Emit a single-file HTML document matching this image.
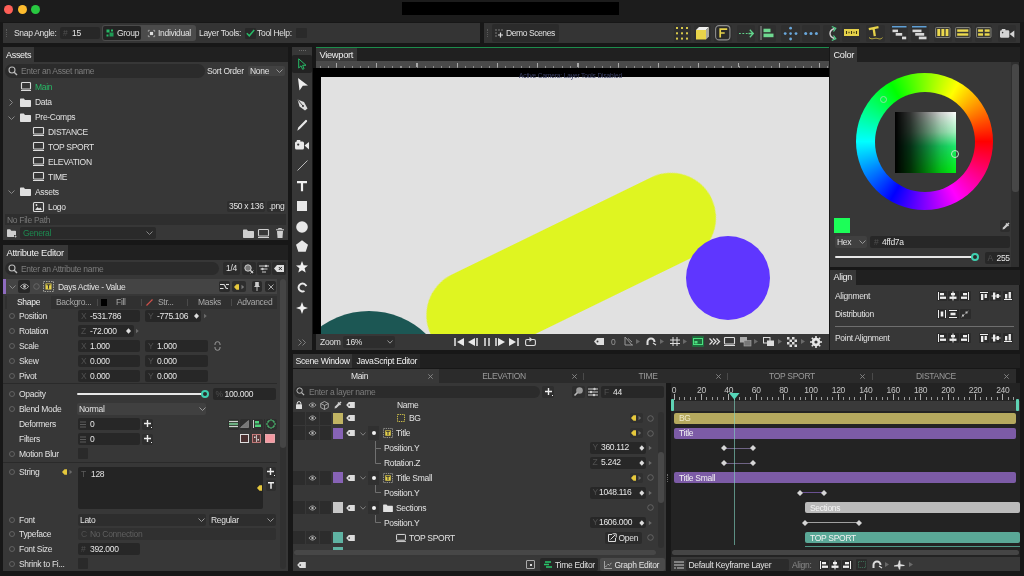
<!DOCTYPE html>
<html><head><meta charset="utf-8"><title>Scene</title>
<style>
*{box-sizing:border-box;margin:0;padding:0}
html,body{width:1024px;height:576px;overflow:hidden;background:#171717}
body{position:relative;font-family:"Liberation Sans",sans-serif;font-size:8.5px;color:#e2e2e2;letter-spacing:-0.3px}
.a{position:absolute}
.p{position:absolute;background:#373737}
.tb{position:absolute;background:#202020}
.tab{position:absolute;background:#373737;color:#f0f0f0;padding:0 0 0 3.5px;font-size:8.7px;line-height:14px;height:14px;white-space:nowrap}
.in{position:absolute;background:#272727;border-radius:2px;height:12px;line-height:12px;padding-left:12px;color:#e6e6e6;white-space:nowrap}
.in i{position:absolute;left:3px;top:0;font-style:normal;color:#505050}
.t{position:absolute;white-space:nowrap;line-height:12px;height:12px}
.d{color:#8c8c8c}
.g{color:#27b866}
svg{position:absolute;overflow:visible}
</style></head><body>
<div id="w" style="position:absolute;left:0;top:0;width:1024px;height:576px;will-change:transform;transform:translateZ(0)">
<!-- title bar -->
<div class="a" style="left:0;top:0;width:1024px;height:22px;background:#1c1c1c"></div>
<div class="a" style="left:4px;top:5px;width:9px;height:9px;border-radius:5px;background:#fe5f57"></div>
<div class="a" style="left:18px;top:5px;width:9px;height:9px;border-radius:5px;background:#febc2e"></div>
<div class="a" style="left:31px;top:5px;width:9px;height:9px;border-radius:5px;background:#28c840"></div>
<div class="a" style="left:402px;top:2px;width:217px;height:13px;background:#000"></div>

<div class="p" style="left:3px;top:23px;width:477px;height:20px;background:#343434"></div>
<div class="p" style="left:484px;top:23px;width:535.5px;height:20px;background:#343434"></div>
<div class="a" style="left:6px;top:29px;width:1px;height:8px;border-left:1px dotted #5a5a5a"></div>
<div class="a" style="left:487px;top:29px;width:1px;height:8px;border-left:1px dotted #5a5a5a"></div>
<div class="t" style="left:14px;top:27px">Snap Angle:</div>
<div class="in" style="left:60px;top:27px;width:40px;height:12px;line-height:12px"><i>#</i>15</div>
<div class="a" style="left:102px;top:25px;width:94px;height:16px;background:#4b4b4b;border-radius:3px"></div>
<div class="a" style="left:103px;top:26px;width:38px;height:14px;background:#232323;border-radius:2px"></div>
<svg style="left:106px;top:29px" width="8" height="8" viewBox="0 0 8 8"><rect x="0.5" y="0.5" width="3" height="3" fill="#27b866"/><rect x="3.5" y="3.5" width="4" height="4" fill="#1f9a55"/><rect x="5" y="0.5" width="2" height="2" fill="#27b866"/><rect x="0.5" y="5.5" width="2" height="2" fill="#27b866"/></svg>
<div class="t" style="left:117px;top:27px">Group</div>
<svg style="left:147.5px;top:29.5px" width="7" height="7" viewBox="0 0 8 8"><rect x="2.2" y="2.2" width="3.6" height="3.6" fill="#ddd"/><path d="M0.4 2V0.4H2M6 0.4H7.6V2M7.6 6V7.6H6M2 7.6H0.4V6" stroke="#bbb" fill="none" stroke-width="0.9"/></svg>
<div class="t" style="left:158px;top:27px">Individual</div>
<div class="t" style="left:199px;top:27px">Layer Tools:</div>
<div class="a" style="left:244.5px;top:27.5px;width:11px;height:11px;background:#282828;border-radius:1px"></div>
<svg style="left:245.5px;top:29px" width="9" height="8" viewBox="0 0 9 8"><path d="M0.8 4.2L3.3 6.8L8.2 1" stroke="#27b866" stroke-width="1.5" fill="none"/></svg>
<div class="t" style="left:257px;top:27px">Tool Help:</div>
<div class="a" style="left:296px;top:28px;width:11px;height:10px;background:#2a2a2a;border-radius:1px"></div>
<div class="a" style="left:492px;top:24px;width:67px;height:18px;background:#2b2b2b;border-radius:2px"></div>
<svg style="left:495px;top:29px" width="9" height="9" viewBox="0 0 9 9"><path d="M0.5 1h1M3.5 1h1M0.5 4h1M6.5 1h1M0.5 7h1" stroke="#ccc" stroke-width="1"/><path d="M5.5 3.5v5M3 6h5" stroke="#ddd" stroke-width="1.2"/></svg>
<div class="t" style="left:506px;top:27px;letter-spacing:-0.42px">Demo Scenes</div>
<!-- right icons -->
<div class="a" style="left:673.5px;top:24.5px;width:17px;height:17px;background:#2f2f2f;border-radius:2px"></div>
<div class="a" style="left:693.5px;top:24.5px;width:17px;height:17px;background:#2f2f2f;border-radius:2px"></div>
<div class="a" style="left:714px;top:24.5px;width:17.5px;height:17px;background:#2f2f2f;border-radius:2px"></div>
<div class="a" style="left:737px;top:24.5px;width:18px;height:17px;background:#2f2f2f;border-radius:2px"></div>
<div class="a" style="left:758px;top:24.5px;width:18px;height:17px;background:#2f2f2f;border-radius:2px"></div>
<div class="a" style="left:781px;top:24.5px;width:18.5px;height:17px;background:#2f2f2f;border-radius:2px"></div>
<div class="a" style="left:801.5px;top:24.5px;width:18.5px;height:17px;background:#2f2f2f;border-radius:2px"></div>
<div class="a" style="left:823px;top:24.5px;width:17px;height:17px;background:#2f2f2f;border-radius:2px"></div>
<div class="a" style="left:842px;top:24.5px;width:18px;height:17px;background:#2f2f2f;border-radius:2px"></div>
<div class="a" style="left:865.5px;top:24.5px;width:19px;height:17px;background:#2f2f2f;border-radius:2px"></div>
<div class="a" style="left:889.5px;top:24.5px;width:18px;height:17px;background:#2f2f2f;border-radius:2px"></div>
<div class="a" style="left:910.5px;top:24.5px;width:18px;height:17px;background:#2f2f2f;border-radius:2px"></div>
<div class="a" style="left:933.5px;top:24.5px;width:18px;height:17px;background:#2f2f2f;border-radius:2px"></div>
<div class="a" style="left:954.5px;top:24.5px;width:17.5px;height:17px;background:#2f2f2f;border-radius:2px"></div>
<div class="a" style="left:974.5px;top:24.5px;width:17.5px;height:17px;background:#2f2f2f;border-radius:2px"></div>
<div class="a" style="left:997.5px;top:24.5px;width:18.5px;height:17px;background:#2f2f2f;border-radius:2px"></div>
<svg style="left:676px;top:26.5px" width="12" height="13" viewBox="0 0 12 13" fill="#d8c84a"><rect x="0" y="0" width="2" height="2"/><rect x="5" y="0" width="2" height="2"/><rect x="10" y="0" width="2" height="2"/><rect x="0" y="5.3" width="2" height="2"/><rect x="5" y="5.3" width="2" height="2"/><rect x="10" y="5.3" width="2" height="2"/><rect x="0" y="10.6" width="2" height="2"/><rect x="5" y="10.6" width="2" height="2"/><rect x="10" y="10.6" width="2" height="2"/></svg>
<svg style="left:695.5px;top:27px" width="13" height="12.5" viewBox="0 0 13 12.5"><path d="M0 3L3 0H13L10 3Z" fill="#f0f0ee"/><path d="M10 3L13 0V9.5L10 12.5Z" fill="#a9a9a0"/><rect x="0" y="3" width="10" height="9.5" fill="#e8d44a"/></svg>
<svg style="left:715px;top:25px" width="15.5" height="15.5" viewBox="0 0 15.5 15.5"><rect x="0.6" y="0.6" width="14.3" height="14.3" rx="3.5" fill="#2a2a2a" stroke="#8e8e8e" stroke-width="1.1"/><path d="M5.2 3.2v9.4M5.2 4.2h7M5.2 8h4.5" stroke="#e6d24a" stroke-width="1.7" fill="none"/></svg>
<svg style="left:739px;top:28.5px" width="15" height="9" viewBox="0 0 15 9"><path d="M0 4.5h1.8M3.4 4.5h1.8M6.8 4.5h1.8" stroke="#62d48c" stroke-width="1.2"/><path d="M9.5 4.5H14M10.8 0.8L14.3 4.5L10.8 8.2" stroke="#62d48c" stroke-width="1.3" fill="none"/></svg>
<svg style="left:759.5px;top:26px" width="14" height="14" viewBox="0 0 14 14"><path d="M1 0v14" stroke="#9a9a9a" stroke-width="1"/><rect x="3.5" y="2.7" width="7" height="3.5" fill="#6fd890"/><rect x="3.5" y="7.6" width="10" height="3.6" fill="#6fd890"/></svg>
<svg style="left:783px;top:25.5px" width="15" height="15" viewBox="0 0 15 15" fill="#6aa8dc"><circle cx="7.6" cy="7.6" r="1.3"/><circle cx="7.6" cy="2.2" r="1.4"/><circle cx="7.6" cy="13" r="1.4"/><circle cx="2.2" cy="7.6" r="1.4"/><circle cx="13" cy="7.6" r="1.4"/></svg>
<svg style="left:804px;top:31.5px" width="14" height="3" viewBox="0 0 14 3" fill="#6aa8dc"><circle cx="1.7" cy="1.5" r="1.5"/><circle cx="7" cy="1.5" r="1.5"/><circle cx="12.4" cy="1.5" r="1.5"/></svg>
<svg style="left:826.5px;top:25.5px" width="10" height="15" viewBox="0 0 10 15"><path d="M7.5 2.5C1.5 4.5 1.5 10.5 7.5 12.5" stroke="#d0d0d0" stroke-width="1.4" fill="none"/><path d="M4.8 0.5L8.8 2.2L6.5 5.5M6.5 9.5L8.8 12.8L4.8 14.5" stroke="#4fd088" stroke-width="1.2" fill="none"/></svg>
<svg style="left:843.5px;top:29.3px" width="15" height="7" viewBox="0 0 15 7"><rect width="15" height="7" fill="#e6d24a"/><path d="M2.5 2v3M5 2.7v1.6M7.5 2v3M10 2.7v1.6M12.5 2v3" stroke="#3d3710" stroke-width="1.1"/></svg>
<svg style="left:868px;top:26px" width="15" height="14" viewBox="0 0 15 14"><path d="M0.8 3.2L10.5 1.2M5.6 2.2L6.8 10.2" stroke="#e6d24a" stroke-width="2.3" fill="none"/><path d="M1 11.5c2.5 2.5 5 0.5 7.5 0.8s3.5 1.6 6-0.6" stroke="#c9b93f" stroke-width="1" fill="none"/></svg>
<svg style="left:891.5px;top:25.5px" width="15" height="14" viewBox="0 0 15 14"><rect x="0" y="0" width="14.5" height="1.5" fill="#5f9fd6"/><rect x="0.5" y="3.6" width="5.5" height="2.6" fill="#d8d8d8"/><rect x="3.7" y="7" width="6.5" height="2.7" fill="#d8d8d8"/><rect x="10" y="10.6" width="4.2" height="2.7" fill="#d8d8d8"/></svg>
<svg style="left:912px;top:25.5px" width="15" height="14" viewBox="0 0 15 14"><rect x="0" y="0" width="14.5" height="1.5" fill="#5f9fd6"/><rect x="0.5" y="3.6" width="9" height="2.6" fill="#d8d8d8"/><rect x="3.2" y="7" width="9" height="2.7" fill="#d8d8d8"/><rect x="6.8" y="10.6" width="7.7" height="2.7" fill="#d8d8d8"/></svg>
<svg style="left:934.8px;top:27.4px" width="15.5" height="11" viewBox="0 0 15.5 11"><rect x="0.5" y="0.5" width="14.5" height="10" rx="1" fill="#3a3a34" stroke="#8a8a84" stroke-width="0.9"/><rect x="2.3" y="2" width="2.8" height="7" fill="#ecd94e"/><rect x="6.4" y="2" width="2.9" height="7" fill="#ecd94e"/><rect x="10.6" y="2" width="2.8" height="7" fill="#ecd94e"/></svg>
<svg style="left:955.2px;top:27.4px" width="15.5" height="11" viewBox="0 0 15.5 11"><rect x="0.5" y="0.5" width="14.5" height="10" rx="1" fill="#3a3a34" stroke="#8a8a84" stroke-width="0.9"/><rect x="2.2" y="2.4" width="11.1" height="2.4" fill="#ecd94e"/><rect x="2.2" y="6.3" width="11.1" height="2.4" fill="#ecd94e"/></svg>
<svg style="left:975.5px;top:27.4px" width="15.5" height="11" viewBox="0 0 15.5 11"><rect x="0.5" y="0.5" width="14.5" height="10" rx="1" fill="#3a3a34" stroke="#8a8a84" stroke-width="0.9"/><rect x="2.1" y="2.4" width="4.9" height="2.4" fill="#ecd94e"/><rect x="8.7" y="2.4" width="4.9" height="2.4" fill="#ecd94e"/><rect x="2.1" y="6.3" width="4.9" height="2.4" fill="#ecd94e"/><rect x="8.7" y="6.3" width="4.9" height="2.4" fill="#ecd94e"/></svg>
<svg style="left:999.7px;top:28.5px" width="14.5" height="9" viewBox="0 0 14.5 9"><rect x="0" y="1.3" width="9.3" height="7.5" rx="1.3" fill="#d4d4d4"/><path d="M9.6 5L14.3 1.5v7.2Z" fill="#d4d4d4"/><rect x="1.8" y="0" width="3.6" height="2" fill="#d4d4d4"/><circle cx="2.6" cy="3.6" r="0.8" fill="#363636"/></svg>

<!-- ASSETS PANEL -->
<div class="tb" style="left:3px;top:47px;width:285px;height:15px"></div>
<div class="tab" style="left:3px;top:47px;width:31px;height:15px;line-height:16.5px;padding-left:3px;font-size:9px">Assets</div>
<div class="p" style="left:3px;top:62px;width:285px;height:178px"></div>
<div class="a" style="left:5px;top:64px;width:200px;height:13.5px;background:#2b2b2b;border-radius:7px"></div>
<svg style="left:8px;top:66px" width="10" height="10" viewBox="0 0 10 10"><circle cx="4" cy="4" r="3" stroke="#bbb" stroke-width="1.1" fill="none"/><path d="M6.2 6.2L9 9" stroke="#bbb" stroke-width="1.4"/></svg>
<div class="t d" style="left:21px;top:65px;color:#7d7d7d">Enter an Asset name</div>
<div class="t" style="left:207px;top:65px">Sort Order</div>
<div class="a" style="left:248px;top:66px;width:36.5px;height:10px;background:#424242;border-radius:2px"></div>
<div class="t" style="left:250px;top:65px">None</div>
<svg style="left:276px;top:69px" width="7" height="4" viewBox="0 0 7 4"><path d="M0.5 0.5L3.5 3.5L6.5 0.5" stroke="#999" fill="none"/></svg>
<!-- tree -->
<svg style="left:21px;top:82px" width="10" height="9" viewBox="0 0 10 9"><rect x="0.5" y="0.5" width="9" height="6.5" rx="0.8" fill="none" stroke="#ddd" stroke-width="1.1"/><path d="M0 8.5h10" stroke="#ddd" stroke-width="1"/></svg>
<div class="t g" style="left:35px;top:81px">Main</div>
<svg style="left:9px;top:99px" width="4" height="7" viewBox="0 0 4 7"><path d="M0.5 0.5L3.5 3.5L0.5 6.5" stroke="#888" fill="none"/></svg>
<svg style="left:20px;top:98px" width="11" height="9" viewBox="0 0 11 9"><path d="M0 1.2Q0 0.5 0.7 0.5H3.8L5 2H10.3Q11 2 11 2.7V8.3Q11 9 10.3 9H0.7Q0 9 0 8.3Z" fill="#e0e0e0"/></svg>
<div class="t" style="left:35px;top:96px">Data</div>
<svg style="left:8px;top:116px" width="7" height="4" viewBox="0 0 7 4"><path d="M0.5 0.5L3.5 3.5L6.5 0.5" stroke="#888" fill="none"/></svg>
<svg style="left:20px;top:113px" width="11" height="9" viewBox="0 0 11 9"><path d="M0 1.2Q0 0.5 0.7 0.5H3.8L5 2H10.3Q11 2 11 2.7V8.3Q11 9 10.3 9H0.7Q0 9 0 8.3Z" fill="#e0e0e0"/></svg>
<div class="t" style="left:35px;top:111px">Pre-Comps</div>
<svg style="left:33px;top:127px" width="11" height="9" viewBox="0 0 11 9"><rect x="0.5" y="0.5" width="10" height="6.5" rx="0.8" fill="none" stroke="#ddd" stroke-width="1.1"/><path d="M0 8.5h11" stroke="#ddd" stroke-width="1"/></svg>
<div class="t" style="left:48px;top:126px">DISTANCE</div>
<svg style="left:33px;top:142px" width="11" height="9" viewBox="0 0 11 9"><rect x="0.5" y="0.5" width="10" height="6.5" rx="0.8" fill="none" stroke="#ddd" stroke-width="1.1"/><path d="M0 8.5h11" stroke="#ddd" stroke-width="1"/></svg>
<div class="t" style="left:48px;top:141px">TOP SPORT</div>
<svg style="left:33px;top:157px" width="11" height="9" viewBox="0 0 11 9"><rect x="0.5" y="0.5" width="10" height="6.5" rx="0.8" fill="none" stroke="#ddd" stroke-width="1.1"/><path d="M0 8.5h11" stroke="#ddd" stroke-width="1"/></svg>
<div class="t" style="left:48px;top:156px">ELEVATION</div>
<svg style="left:33px;top:172px" width="11" height="9" viewBox="0 0 11 9"><rect x="0.5" y="0.5" width="10" height="6.5" rx="0.8" fill="none" stroke="#ddd" stroke-width="1.1"/><path d="M0 8.5h11" stroke="#ddd" stroke-width="1"/></svg>
<div class="t" style="left:48px;top:171px">TIME</div>
<svg style="left:8px;top:190px" width="7" height="4" viewBox="0 0 7 4"><path d="M0.5 0.5L3.5 3.5L6.5 0.5" stroke="#888" fill="none"/></svg>
<svg style="left:20px;top:187px" width="11" height="9" viewBox="0 0 11 9"><path d="M0 1.2Q0 0.5 0.7 0.5H3.8L5 2H10.3Q11 2 11 2.7V8.3Q11 9 10.3 9H0.7Q0 9 0 8.3Z" fill="#e0e0e0"/></svg>
<div class="t" style="left:35px;top:186px">Assets</div>
<svg style="left:33px;top:202px" width="11" height="10" viewBox="0 0 11 10"><rect x="0.5" y="0.5" width="10" height="9" rx="1" fill="none" stroke="#ddd" stroke-width="1.1"/><path d="M2 8L4.5 5L6 6.5L7.5 5.5L9 8Z" fill="#ddd"/><circle cx="3.5" cy="3" r="0.9" fill="#ddd"/></svg>
<div class="t" style="left:48px;top:201px">Logo</div>
<div class="a" style="left:227px;top:201px;width:38px;height:11px;background:#2e2e2e;border-radius:2px"></div>
<div class="t" style="left:229px;top:200px">350 x 136</div>
<div class="a" style="left:267px;top:201px;width:18px;height:11px;background:#2e2e2e;border-radius:2px"></div>
<div class="t" style="left:269px;top:200px">.png</div>
<div class="a" style="left:5px;top:214px;width:281px;height:11px;background:#2e2e2e"></div>
<div class="t" style="left:7px;top:214px;color:#7a7a7a">No File Path</div>
<svg style="left:7px;top:229px" width="10" height="9" viewBox="0 0 10 9"><path d="M0 1Q0 0.3 0.7 0.3H3.2L4.3 1.7H8.3Q9 1.7 9 2.4V7.3Q9 8 8.3 8H0.7Q0 8 0 7.3Z" fill="#cfcfcf"/><rect x="7" y="6" width="3" height="3" fill="#383838"/><path d="M8.5 6.5v2M7.5 7.5h2" stroke="#cfcfcf" stroke-width="0.8"/></svg>
<div class="a" style="left:20px;top:227px;width:136px;height:12px;background:#2a2a2a;border-radius:2px"></div>
<div class="t" style="left:23px;top:227px;color:#1d8a50">General</div>
<svg style="left:146px;top:231px" width="7" height="4" viewBox="0 0 7 4"><path d="M0.5 0.5L3.5 3.5L6.5 0.5" stroke="#888" fill="none"/></svg>
<svg style="left:243px;top:229px" width="11" height="9" viewBox="0 0 11 9"><path d="M0 1.2Q0 0.5 0.7 0.5H3.8L5 2H10.3Q11 2 11 2.7V8.3Q11 9 10.3 9H0.7Q0 9 0 8.3Z" fill="#cfcfcf"/></svg>
<svg style="left:258px;top:229px" width="11" height="9" viewBox="0 0 11 9"><rect x="0.5" y="0.5" width="10" height="6.5" rx="0.8" fill="none" stroke="#cfcfcf" stroke-width="1.1"/><path d="M0 8.5h11" stroke="#cfcfcf" stroke-width="1"/></svg>
<svg style="left:276px;top:228px" width="8" height="10" viewBox="0 0 8 10"><path d="M0 1.8h8M2.5 1.5V0.5h3v1" stroke="#cfcfcf" fill="none" stroke-width="1"/><path d="M1 3h6l-0.5 7h-5Z" fill="#cfcfcf"/></svg>
<!-- ATTRIBUTE EDITOR -->
<div class="tb" style="left:3px;top:245px;width:285px;height:15px"></div>
<div class="tab" style="left:3px;top:245px;width:65px;height:15px;line-height:16px;font-size:9.4px">Attribute Editor</div>
<div class="p" style="left:3px;top:260px;width:285px;height:311px"></div>
<div class="a" style="left:5px;top:262px;width:214px;height:13px;background:#2b2b2b;border-radius:7px"></div>
<svg style="left:8px;top:264px" width="10" height="10" viewBox="0 0 10 10"><circle cx="4" cy="4" r="3" stroke="#bbb" stroke-width="1.1" fill="none"/><path d="M6.2 6.2L9 9" stroke="#bbb" stroke-width="1.4"/></svg>
<div class="t" style="left:21px;top:263px;color:#7d7d7d">Enter an Attribute name</div>
<div class="a" style="left:223px;top:262px;width:17px;height:13px;background:#2b2b2b;border-radius:2px"></div>
<div class="t" style="left:226px;top:262px">1/4</div>
<div class="a" style="left:242px;top:262px;width:14px;height:13px;background:#2b2b2b;border-radius:2px"></div>
<svg style="left:244px;top:264px" width="10" height="10" viewBox="0 0 10 10"><circle cx="4" cy="4" r="3.2" stroke="#ccc" stroke-width="1" fill="#777"/><path d="M6 6L9 9" stroke="#ccc" stroke-width="1.4"/><path d="M6.5 9.5L9.5 6.5" stroke="#ccc" stroke-width="0.8"/></svg>
<div class="a" style="left:257px;top:262px;width:14px;height:13px;background:#2b2b2b;border-radius:2px"></div>
<svg style="left:259px;top:265px" width="10" height="8" viewBox="0 0 10 8"><path d="M0 1h10M1.5 4h7M3 7h4" stroke="#ccc" stroke-width="1.2"/><circle cx="7" cy="1" r="1.2" fill="#ccc"/><circle cx="3.5" cy="4" r="1.2" fill="#ccc"/></svg>
<div class="a" style="left:272px;top:262px;width:14px;height:13px;background:#2b2b2b;border-radius:2px"></div>
<svg style="left:274px;top:265px" width="10" height="7" viewBox="0 0 10 7"><path d="M0 3.5L3 0H10V7H3Z" fill="#ddd"/><path d="M4.8 2l3 3M7.8 2l-3 3" stroke="#2b2b2b" stroke-width="1"/></svg>
<!-- layer header -->
<div class="a" style="left:3px;top:279px;width:274px;height:15px;background:#444"></div>
<div class="a" style="left:3px;top:279px;width:3px;height:15px;background:#8e6bbf"></div>
<svg style="left:9px;top:285px" width="7" height="4" viewBox="0 0 7 4"><path d="M0.5 0.5L3.5 3.5L6.5 0.5" stroke="#888" fill="none"/></svg>
<div class="a" style="left:18px;top:280px;width:12px;height:13px;background:#282828;border-radius:2px"></div>
<svg style="left:20px;top:283px" width="9" height="7" viewBox="0 0 9 7"><path d="M0.3 3.5Q4.5 -1.5 8.7 3.5Q4.5 8.5 0.3 3.5Z" fill="none" stroke="#bbb" stroke-width="0.9"/><circle cx="4.5" cy="3.5" r="1.4" fill="#bbb"/></svg>
<svg style="left:33px;top:283px" width="7" height="7" viewBox="0 0 7 7"><circle cx="3.5" cy="3.5" r="2.8" fill="none" stroke="#666" stroke-width="1"/></svg>
<svg style="left:43px;top:281px" width="11" height="11" viewBox="0 0 11 11"><rect x="0.5" y="0.5" width="10" height="10" fill="none" stroke="#b8b8b0" stroke-width="0.8" stroke-dasharray="1.5 1"/><rect x="2.5" y="2.5" width="6" height="6" fill="#e6d24a"/><path d="M3.5 3.7h4M5.5 3.7v4" stroke="#333" stroke-width="1.1"/></svg>
<div class="t" style="left:58px;top:281px">Days Active - Value</div>
<div class="a" style="left:218.5px;top:281px;width:11.5px;height:11px;background:#2a2a2a;border-radius:2px"></div>
<svg style="left:219.5px;top:283px" width="10" height="7" viewBox="0 0 10 7"><path d="M0 1.5h3.5M0 5.5h3.5M3.5 1.5C6 1.5 4.5 5.5 7 5.5H8" stroke="#ddd" stroke-width="1.1" fill="none"/><path d="M6 1.5h3" stroke="#ddd" stroke-width="1.1"/></svg>
<div class="a" style="left:232px;top:281px;width:14px;height:11px;background:#2d2d2d;border-radius:2px"></div>
<svg style="left:234px;top:284px" width="11" height="6" viewBox="0 0 11 6"><path d="M0 3L2.5 0.3H5V5.7H2.5Z" fill="#e6c83c"/><path d="M7.5 0.8L10.2 3L7.5 5.2Z" fill="#7a7a7a"/></svg>
<div class="a" style="left:251.5px;top:281px;width:10.5px;height:11px;background:#2a2a2a;border-radius:2px"></div>
<svg style="left:254px;top:282px" width="6" height="9" viewBox="0 0 6 9"><path d="M1.2 0h3.6v3.5L6 5H0L1.2 3.5Z" fill="#ccc"/><path d="M3 5v4" stroke="#ccc" stroke-width="0.9"/></svg>
<div class="a" style="left:265px;top:281px;width:11px;height:11px;background:#2a2a2a;border-radius:2px"></div>
<svg style="left:267.5px;top:283.5px" width="6" height="6" viewBox="0 0 6 6"><path d="M0.5 0.5L5.5 5.5M5.5 0.5L0.5 5.5" stroke="#aaa" stroke-width="1"/></svg>
<!-- sub tabs -->
<div class="a" style="left:5px;top:296px;width:272px;height:13px;background:#303030"></div>
<div class="a" style="left:6.5px;top:296px;width:44px;height:13px;background:#373737"></div>
<div class="t" style="left:17px;top:296px;color:#f2f2f2">Shape</div>
<div class="t" style="left:56px;top:296px;color:#a8a8a8">Backgro...</div>
<div class="a" style="left:101px;top:299px;width:6px;height:7px;background:#000"></div>
<div class="t" style="left:116px;top:296px;color:#a8a8a8">Fill</div>
<svg style="left:146px;top:299px" width="7" height="7" viewBox="0 0 7 7"><path d="M0.5 6.5L6.5 0.5" stroke="#d0504a" stroke-width="1.2"/></svg>
<div class="t" style="left:158px;top:296px;color:#a8a8a8">Str...</div>
<div class="t" style="left:198px;top:296px;color:#a8a8a8">Masks</div>
<div class="t" style="left:237px;top:296px;color:#a8a8a8">Advanced</div>
<div class="a" style="left:97px;top:299px;width:1px;height:7px;background:#4a4a4a"></div>
<div class="a" style="left:141px;top:299px;width:1px;height:7px;background:#4a4a4a"></div>
<div class="a" style="left:187px;top:299px;width:1px;height:7px;background:#4a4a4a"></div>
<div class="a" style="left:231px;top:299px;width:1px;height:7px;background:#4a4a4a"></div>
<svg style="left:9px;top:313px" width="6" height="6" viewBox="0 0 6 6"><circle cx="3" cy="3" r="2.5" fill="none" stroke="#666" stroke-width="0.9"/></svg>
<div class="t" style="left:19px;top:310px">Position</div>
<div class="in" style="left:78px;top:310px;width:62px"><i>X</i>-531.786</div>
<div class="in" style="left:145px;top:310px;width:56px"><i>Y</i>-775.106</div>
<svg style="left:193.5px;top:313px" width="14" height="6" viewBox="0 0 14 6"><path d="M2.5 0.2L5 3L2.5 5.8L0 3Z" fill="#ddd"/><path d="M10 0.8L12.8 3L10 5.2Z" fill="#6a6a6a"/></svg>
<svg style="left:9px;top:328px" width="6" height="6" viewBox="0 0 6 6"><circle cx="3" cy="3" r="2.5" fill="none" stroke="#666" stroke-width="0.9"/></svg>
<div class="t" style="left:19px;top:325px">Rotation</div>
<div class="in" style="left:78px;top:325px;width:55.5px"><i>Z</i>-72.000</div>
<svg style="left:125.5px;top:328px" width="14" height="6" viewBox="0 0 14 6"><path d="M2.5 0.2L5 3L2.5 5.8L0 3Z" fill="#ddd"/><path d="M10 0.8L12.8 3L10 5.2Z" fill="#6a6a6a"/></svg>
<svg style="left:9px;top:343px" width="6" height="6" viewBox="0 0 6 6"><circle cx="3" cy="3" r="2.5" fill="none" stroke="#666" stroke-width="0.9"/></svg>
<div class="t" style="left:19px;top:340px">Scale</div>
<div class="in" style="left:78px;top:340px;width:62px"><i>X</i>1.000</div>
<div class="in" style="left:145px;top:340px;width:63px"><i>Y</i>1.000</div>
<svg style="left:214px;top:341px" width="7" height="10" viewBox="0 0 7 10"><path d="M1 4V3Q1 0.7 3.5 0.7Q6 0.7 6 3V4M1 6V7Q1 9.3 3.5 9.3Q6 9.3 6 7V6" stroke="#999" fill="none" stroke-width="1"/></svg>
<svg style="left:9px;top:358px" width="6" height="6" viewBox="0 0 6 6"><circle cx="3" cy="3" r="2.5" fill="none" stroke="#666" stroke-width="0.9"/></svg>
<div class="t" style="left:19px;top:355px">Skew</div>
<div class="in" style="left:78px;top:355px;width:62px"><i>X</i>0.000</div>
<div class="in" style="left:145px;top:355px;width:63px"><i>Y</i>0.000</div>
<svg style="left:9px;top:373px" width="6" height="6" viewBox="0 0 6 6"><circle cx="3" cy="3" r="2.5" fill="none" stroke="#666" stroke-width="0.9"/></svg>
<div class="t" style="left:19px;top:370px">Pivot</div>
<div class="in" style="left:78px;top:370px;width:62px"><i>X</i>0.000</div>
<div class="in" style="left:145px;top:370px;width:63px"><i>Y</i>0.000</div>
<div class="a" style="left:3px;top:383px;width:274px;height:1px;background:#2a2a2a"></div>
<svg style="left:9px;top:391px" width="6" height="6" viewBox="0 0 6 6"><circle cx="3" cy="3" r="2.5" fill="none" stroke="#666" stroke-width="0.9"/></svg>
<div class="t" style="left:19px;top:388px">Opacity</div>
<div class="a" style="left:77px;top:393px;width:128px;height:2px;background:#e8e8e8;border-radius:1px"></div>
<div class="a" style="left:201px;top:390px;width:8px;height:8px;border-radius:4px;background:#2b2b2b;border:2px solid #3fd0b0"></div>
<div class="in" style="left:212.5px;top:388px;width:63px"><i>%</i>100.000</div>
<svg style="left:9px;top:406px" width="6" height="6" viewBox="0 0 6 6"><circle cx="3" cy="3" r="2.5" fill="none" stroke="#666" stroke-width="0.9"/></svg>
<div class="t" style="left:19px;top:403px">Blend Mode</div>
<div class="a" style="left:77px;top:403px;width:129px;height:12px;background:#404040;border-radius:2px"></div>
<div class="t" style="left:79px;top:403px">Normal</div>
<svg style="left:199px;top:407px" width="7" height="4" viewBox="0 0 7 4"><path d="M0.5 0.5L3.5 3.5L6.5 0.5" stroke="#999" fill="none"/></svg>
<div class="t" style="left:19px;top:418px">Deformers</div>
<div class="in" style="left:78px;top:418px;width:62px"><i></i>0</div>
<svg style="left:80px;top:421px" width="6" height="7" viewBox="0 0 6 7"><path d="M0 1h6M0 3.5h6M0 6h6" stroke="#5c5c5c" stroke-width="1"/></svg>
<div class="a" style="left:142px;top:418.5px;width:11.3px;height:11px;background:#2e2e2e;border-radius:2px"></div>
<svg style="left:144px;top:420px" width="8" height="8" viewBox="0 0 8 8"><path d="M3.5 0v7M0 3.5h7" stroke="#eee" stroke-width="1.4"/><rect x="7" y="7" width="1" height="1" fill="#eee"/></svg>
<div class="a" style="left:228px;top:418.5px;width:11px;height:11px;background:#2e2e2e;border-radius:2px"></div>
<div class="a" style="left:239.5px;top:418.5px;width:11px;height:11px;background:#2e2e2e;border-radius:2px"></div>
<div class="a" style="left:251.5px;top:418.5px;width:11px;height:11px;background:#2e2e2e;border-radius:2px"></div>
<div class="a" style="left:265.5px;top:418.5px;width:11px;height:11px;background:#2e2e2e;border-radius:2px"></div>
<div class="a" style="left:264px;top:419px;width:1px;height:25px;background:#2c2c2c"></div>
<svg style="left:229px;top:420px" width="9" height="8" viewBox="0 0 9 8"><rect width="9" height="8" fill="#3c4a3c"/><path d="M0 1.5h9M0 4h9M0 6.5h9" stroke="#cfcfcf" stroke-width="1.2"/><path d="M0 4h9" stroke="#4fd07a" stroke-width="1"/></svg>
<svg style="left:240px;top:420px" width="9" height="8" viewBox="0 0 9 8"><path d="M0.5 7.5L8.5 0.5V7.5Z" fill="#777" stroke="#999" stroke-width="0.6"/></svg>
<svg style="left:252px;top:419px" width="10" height="10" viewBox="0 0 10 10"><rect width="10" height="10" fill="#2f2f2f"/><path d="M1.5 1v8" stroke="#ccc" stroke-width="1"/><rect x="3" y="2" width="4" height="2.5" fill="#4fd07a"/><rect x="3" y="5.5" width="6" height="2.5" fill="#4fd07a"/></svg>
<svg style="left:266px;top:419px" width="10" height="10" viewBox="0 0 10 10"><path d="M5 0.5L6.5 2H8V3.5L9.5 5L8 6.5V8H6.5L5 9.5L3.5 8H2V6.5L0.5 5L2 3.5V2H3.5Z" fill="none" stroke="#4fd07a" stroke-width="1"/></svg>
<div class="t" style="left:19px;top:433px">Filters</div>
<div class="in" style="left:78px;top:433px;width:62px"><i></i>0</div>
<svg style="left:80px;top:436px" width="6" height="7" viewBox="0 0 6 7"><path d="M0 1h6M0 3.5h6M0 6h6" stroke="#5c5c5c" stroke-width="1"/></svg>
<div class="a" style="left:142px;top:433.5px;width:11.3px;height:11px;background:#2e2e2e;border-radius:2px"></div>
<svg style="left:144px;top:435px" width="8" height="8" viewBox="0 0 8 8"><path d="M3.5 0v7M0 3.5h7" stroke="#eee" stroke-width="1.4"/><rect x="7" y="7" width="1" height="1" fill="#eee"/></svg>
<svg style="left:240px;top:434px" width="9" height="9" viewBox="0 0 9 9"><rect x="0.5" y="0.5" width="8" height="8" fill="#4a3030" stroke="#ddd" stroke-width="1"/></svg>
<svg style="left:252px;top:434px" width="9" height="9" viewBox="0 0 9 9"><rect x="0.5" y="0.5" width="8" height="8" fill="#5a3a3a" stroke="#d88" stroke-width="0.8"/><path d="M4.5 1v7" stroke="#ddd" stroke-width="0.8"/><rect x="2" y="2.5" width="1.5" height="1.5" fill="#ddd"/><rect x="5.5" y="5" width="1.5" height="1.5" fill="#ddd"/></svg>
<svg style="left:265px;top:434px" width="10" height="9" viewBox="0 0 10 9"><rect x="0.5" y="0.5" width="9" height="8" fill="#f49aa2" stroke="#f9b8bc" stroke-width="0.8"/></svg>
<svg style="left:9px;top:451px" width="6" height="6" viewBox="0 0 6 6"><circle cx="3" cy="3" r="2.5" fill="none" stroke="#666" stroke-width="0.9"/></svg>
<div class="t" style="left:19px;top:448px">Motion Blur</div>
<div class="a" style="left:78px;top:448px;width:10px;height:11px;background:#2a2a2a;border-radius:1px"></div>
<div class="a" style="left:3px;top:462px;width:274px;height:1px;background:#2a2a2a"></div>
<svg style="left:9px;top:469px" width="6" height="6" viewBox="0 0 6 6"><circle cx="3" cy="3" r="2.5" fill="none" stroke="#666" stroke-width="0.9"/></svg>
<div class="t" style="left:19px;top:466px">String</div>
<svg style="left:62px;top:469px" width="11" height="6" viewBox="0 0 11 6"><path d="M0 3L2.5 0.3H5V5.7H2.5Z" fill="#e6c83c"/><path d="M7.5 0.8L10.2 3L7.5 5.2Z" fill="#6a6a6a"/></svg>
<div class="a" style="left:78px;top:467px;width:185px;height:42px;background:#242424;border-radius:2px"></div>
<div class="t" style="left:81px;top:468px;color:#5c5c5c">T</div>
<div class="t" style="left:91px;top:468px">128</div>
<div class="a" style="left:266px;top:467px;width:10px;height:11px;background:#2e2e2e;border-radius:2px"></div>
<svg style="left:267px;top:468px" width="8" height="8" viewBox="0 0 8 8"><path d="M3.5 0v7M0 3.5h7" stroke="#eee" stroke-width="1.4"/><rect x="7" y="7" width="1" height="1" fill="#eee"/></svg>
<div class="a" style="left:266px;top:480px;width:10px;height:11px;background:#2e2e2e;border-radius:2px"></div>
<svg style="left:268px;top:482px" width="6" height="7" viewBox="0 0 6 7"><path d="M0 0.8h6M3 0.8v6" stroke="#eee" stroke-width="1.5"/></svg>
<svg style="left:257px;top:485px" width="5" height="6" viewBox="0 0 5 6"><path d="M0 3L2.5 0.3H5V5.7H2.5Z" fill="#e6c83c"/></svg>
<svg style="left:9px;top:517px" width="6" height="6" viewBox="0 0 6 6"><circle cx="3" cy="3" r="2.5" fill="none" stroke="#666" stroke-width="0.9"/></svg>
<div class="t" style="left:19px;top:514px">Font</div>
<div class="a" style="left:78px;top:514px;width:128px;height:12px;background:#2d2d2d;border-radius:2px"></div>
<div class="t" style="left:80px;top:514px">Lato</div>
<svg style="left:198px;top:518px" width="7" height="4" viewBox="0 0 7 4"><path d="M0.5 0.5L3.5 3.5L6.5 0.5" stroke="#999" fill="none"/></svg>
<div class="a" style="left:208.5px;top:514px;width:67px;height:12px;background:#2d2d2d;border-radius:2px"></div>
<div class="t" style="left:211px;top:514px">Regular</div>
<svg style="left:267px;top:518px" width="7" height="4" viewBox="0 0 7 4"><path d="M0.5 0.5L3.5 3.5L6.5 0.5" stroke="#999" fill="none"/></svg>
<svg style="left:9px;top:531px" width="6" height="6" viewBox="0 0 6 6"><circle cx="3" cy="3" r="2.5" fill="none" stroke="#666" stroke-width="0.9"/></svg>
<div class="t" style="left:19px;top:528px">Typeface</div>
<div class="in" style="left:78px;top:528px;width:197.5px;background:#303030"><i>C</i><span style="color:#5f5f5f">No Connection</span></div>
<svg style="left:9px;top:546px" width="6" height="6" viewBox="0 0 6 6"><circle cx="3" cy="3" r="2.5" fill="none" stroke="#666" stroke-width="0.9"/></svg>
<div class="t" style="left:19px;top:543px">Font Size</div>
<div class="in" style="left:78px;top:543px;width:62px"><i>#</i>392.000</div>
<svg style="left:9px;top:561px" width="6" height="6" viewBox="0 0 6 6"><circle cx="3" cy="3" r="2.5" fill="none" stroke="#666" stroke-width="0.9"/></svg>
<div class="t" style="left:19px;top:558px">Shrink to Fi...</div>
<div class="a" style="left:78px;top:558px;width:10px;height:11px;background:#2a2a2a;border-radius:1px"></div>
<div class="a" style="left:280px;top:279px;width:5.5px;height:290px;background:#313131;border-radius:3px"></div>
<div class="a" style="left:280px;top:279px;width:5.5px;height:169px;background:#454545;border-radius:3px"></div>

<!-- TOOLS COLUMN -->
<div class="p" style="left:292px;top:47px;width:20px;height:303px"></div>
<div class="a" style="left:299px;top:50px;width:7px;height:1px;border-top:1px dotted #6a6a6a"></div>
<div class="a" style="left:292px;top:55px;width:20px;height:18px;background:#222;border-radius:2px"></div>
<svg style="left:298px;top:58px" width="9" height="12" viewBox="0 0 9 12"><path d="M0.7 0.8V10L3 7.8L4.6 11.3L6.1 10.6L4.6 7.3H8Z" fill="none" stroke="#27b866" stroke-width="1"/></svg>
<svg style="left:298px;top:78px" width="10" height="13" viewBox="0 0 10 13"><path d="M0 0L10 7.5L4.8 7.8L1.5 12.5Z" fill="#eee"/></svg>
<svg style="left:297px;top:99px" width="11" height="12" viewBox="0 0 11 12"><path d="M0.5 0.5L7 3L10.5 9.5L8 11.5L2.5 7.5Z" fill="#ddd"/><path d="M0.5 0.5L6 7" stroke="#383838" stroke-width="0.9"/><circle cx="6" cy="7" r="1" fill="#383838"/></svg>
<svg style="left:297px;top:119px" width="11" height="12" viewBox="0 0 11 12"><path d="M0.3 11.7L1.2 8.5L8.3 1.2Q9 0.5 9.8 1.3Q10.6 2.1 9.9 2.8L2.8 10.1Z" fill="#e8e8e8"/></svg>
<svg style="left:295px;top:140px" width="14" height="10" viewBox="0 0 14 10"><rect x="0" y="1.5" width="9" height="8" rx="1.5" fill="#e8e8e8"/><path d="M9.5 5.5L14 2v7.5Z" fill="#e8e8e8"/><rect x="1.8" y="0" width="3.5" height="2.5" fill="#e8e8e8"/><circle cx="3.2" cy="4.6" r="1.1" fill="#383838"/></svg>
<svg style="left:297px;top:160px" width="11" height="11" viewBox="0 0 11 11"><path d="M0.5 10.5L10.5 0.5" stroke="#bbb" stroke-width="1"/></svg>
<svg style="left:297px;top:181px" width="10" height="10" viewBox="0 0 10 10"><path d="M0 1.2h10M5 1.2v9" stroke="#f0f0f0" stroke-width="2.2"/></svg>
<svg style="left:297px;top:201px" width="10" height="10" viewBox="0 0 10 10"><rect width="10" height="10" fill="#e8e8e8"/></svg>
<svg style="left:296px;top:221px" width="12" height="12" viewBox="0 0 12 12"><circle cx="6" cy="6" r="5.8" fill="#e8e8e8"/></svg>
<svg style="left:296px;top:240px" width="12" height="12" viewBox="0 0 12 12"><path d="M6 0.3L12 4.7L9.7 11.7H2.3L0 4.7Z" fill="#e8e8e8"/></svg>
<svg style="left:296px;top:261px" width="12" height="12" viewBox="0 0 12 12"><path d="M6 0L7.6 4.2L12 4.5L8.6 7.3L9.7 11.6L6 9.2L2.3 11.6L3.4 7.3L0 4.5L4.4 4.2Z" fill="#f0f0f0"/></svg>
<svg style="left:297px;top:282px" width="11" height="11" viewBox="0 0 11 11"><path d="M9.3 4.1A4 4 0 1 0 7.5 9" stroke="#e8e8e8" stroke-width="2" fill="none"/></svg>
<svg style="left:296px;top:302px" width="12" height="12" viewBox="0 0 12 12"><path d="M6 0L7.6 4.4L12 6L7.6 7.6L6 12L4.4 7.6L0 6L4.4 4.4Z" fill="#f0f0f0"/></svg>
<svg style="left:298px;top:339px" width="8" height="7" viewBox="0 0 8 7"><path d="M0.5 0.5L3.5 3.5L0.5 6.5M4.5 0.5L7.5 3.5L4.5 6.5" stroke="#888" fill="none" stroke-width="0.9"/></svg>

<!-- VIEWPORT -->
<div class="tb" style="left:316px;top:47px;width:513px;height:15px"></div>
<div class="a" style="left:316px;top:47px;width:513px;height:1px;background:#1d8c4c"></div>
<div class="tab" style="left:316px;top:48px;width:41px;height:13px;line-height:15px;font-size:9.3px">Viewport</div>
<div class="a" style="left:316px;top:61px;width:513px;height:7px;background:#4a4a4a"></div>
<div class="a" style="left:320px;top:66px;width:509px;height:2px;background:repeating-linear-gradient(90deg,#8e8e8e 0,#8e8e8e 1px,transparent 1px,transparent 8.05px)"></div>
<div class="a" style="left:336.1px;top:63px;width:493px;height:4px;background:repeating-linear-gradient(90deg,#a8a8a8 0,#a8a8a8 1px,transparent 1px,transparent 40.25px)"></div>
<div class="a" style="left:313px;top:68px;width:516px;height:266px;background:#000"></div>
<div class="a" style="left:321px;top:77px;width:508px;height:257px;background:#e1e1e1;overflow:hidden">
  <div class="a" style="left:-34.4px;top:233.8px;width:164px;height:164px;border-radius:82px;background:#1c5754"></div>
  <div class="a" style="left:83px;top:96.4px;width:311.5px;height:90px;border-radius:45px;background:#dff521;transform-origin:266.5px 45px;transform:rotate(-26deg);filter:blur(0.6px)"></div>
  <div class="a" style="left:365px;top:159px;width:84px;height:84px;border-radius:42px;background:#5f36ff"></div>
</div>
<div class="t" style="left:519px;top:70px;font-size:6.5px;color:#3a3f66;letter-spacing:-0.1px">Active Camera: Layer Tools Disabled</div>
<div class="p" style="left:316px;top:333.5px;width:513px;height:16px"></div>
<div class="t" style="left:320px;top:336px">Zoom</div>
<div class="a" style="left:343px;top:336px;width:52px;height:12px;background:#2d2d2d;border-radius:2px"></div>
<div class="t" style="left:346px;top:336px">16%</div>
<svg style="left:387px;top:340px" width="6" height="4" viewBox="0 0 6 4"><path d="M0.5 0.5L3 3.2L5.5 0.5" stroke="#999" fill="none"/></svg>
<svg style="left:454px;top:338px" width="10" height="8" viewBox="0 0 10 8"><path d="M1 0v8" stroke="#e8e8e8" stroke-width="1.5"/><path d="M10 0v8L3 4Z" fill="#e8e8e8"/></svg>
<svg style="left:468px;top:338px" width="10" height="8" viewBox="0 0 10 8"><path d="M7 0v8L0 4Z" fill="#e8e8e8"/><path d="M9 0v8" stroke="#e8e8e8" stroke-width="1.5"/></svg>
<svg style="left:484px;top:338px" width="6" height="8" viewBox="0 0 6 8"><path d="M1 0v8M5 0v8" stroke="#e8e8e8" stroke-width="1.5"/></svg>
<svg style="left:495px;top:338px" width="10" height="8" viewBox="0 0 10 8"><path d="M1 0v8" stroke="#e8e8e8" stroke-width="1.5"/><path d="M3 0v8L10 4Z" fill="#e8e8e8"/></svg>
<svg style="left:509px;top:338px" width="10" height="8" viewBox="0 0 10 8"><path d="M0 0v8L7 4Z" fill="#e8e8e8"/><path d="M9 0v8" stroke="#e8e8e8" stroke-width="1.5"/></svg>
<svg style="left:525px;top:337px" width="11" height="9" viewBox="0 0 11 9"><rect x="0.6" y="2.5" width="9.8" height="6" rx="1.5" fill="none" stroke="#ddd" stroke-width="1.1"/><path d="M4.5 0L7.5 2.5L4.5 5Z" fill="#ddd"/></svg>
<!-- right icons of viewport bar -->
<svg style="left:594px;top:338px" width="10" height="7" viewBox="0 0 10 7"><path d="M0 3.5L3 0H10V7H3Z" fill="#ddd"/><circle cx="3.5" cy="3.5" r="1" fill="#383838"/></svg>
<div class="t" style="left:611px;top:336px;color:#999">0</div>
<svg style="left:624px;top:337px" width="9" height="9" viewBox="0 0 9 9"><path d="M1 0v8h8M1 0L8 8M4 1.5L8 5" stroke="#999" stroke-width="1" fill="none"/></svg>
<svg style="left:636px;top:339px" width="4" height="5" viewBox="0 0 4 5"><path d="M0 0L4 2.5L0 5Z" fill="#6a6a6a"/></svg>
<svg style="left:646px;top:337px" width="10" height="9" viewBox="0 0 10 9"><path d="M1.5 8V5A3.5 3.5 0 0 1 8.5 5" stroke="#ddd" stroke-width="2" fill="none"/><path d="M7 6l3 2" stroke="#ddd" stroke-width="1.2"/></svg>
<svg style="left:660px;top:339px" width="4" height="5" viewBox="0 0 4 5"><path d="M0 0L4 2.5L0 5Z" fill="#6a6a6a"/></svg>
<svg style="left:670px;top:337px" width="10" height="9" viewBox="0 0 10 9"><path d="M3 0v9M7 0v9M0 3h10M0 6.5h10" stroke="#ddd" stroke-width="1"/></svg>
<svg style="left:683px;top:339px" width="4" height="5" viewBox="0 0 4 5"><path d="M0 0L4 2.5L0 5Z" fill="#6a6a6a"/></svg>
<div class="a" style="left:692px;top:336px;width:12px;height:11px;background:#1f6a3c;border-radius:1px"></div>
<svg style="left:693px;top:338px" width="10" height="7" viewBox="0 0 10 7"><rect x="0.5" y="0.5" width="9" height="6" fill="none" stroke="#4be07f" stroke-width="1"/><rect x="1.5" y="3" width="3" height="2.5" fill="#4be07f"/></svg>
<svg style="left:709px;top:338px" width="11" height="7" viewBox="0 0 11 7"><path d="M0.5 0.5L3.5 3.5L0.5 6.5M4 0.5L7 3.5L4 6.5M7.5 0.5L10.5 3.5L7.5 6.5" stroke="#ddd" stroke-width="1.3" fill="none"/></svg>
<svg style="left:724px;top:337px" width="11" height="9" viewBox="0 0 11 9"><rect x="0.5" y="0.5" width="10" height="6.5" rx="0.8" fill="none" stroke="#ddd" stroke-width="1.1"/><path d="M0 8.5h11" stroke="#ddd" stroke-width="1"/></svg>
<svg style="left:740px;top:337px" width="11" height="9" viewBox="0 0 11 9"><rect x="0" y="0" width="7" height="5.5" fill="#aaa"/><rect x="4" y="3.5" width="7" height="5.5" fill="#777" stroke="#aaa" stroke-width="0.6"/></svg>
<svg style="left:754px;top:339px" width="4" height="5" viewBox="0 0 4 5"><path d="M0 0L4 2.5L0 5Z" fill="#6a6a6a"/></svg>
<svg style="left:763px;top:337px" width="11" height="9" viewBox="0 0 11 9"><rect x="0.5" y="0.5" width="6.5" height="5.5" fill="none" stroke="#ddd" stroke-width="1"/><rect x="4" y="3.5" width="7" height="5.5" fill="#ddd"/></svg>
<svg style="left:778px;top:339px" width="4" height="5" viewBox="0 0 4 5"><path d="M0 0L4 2.5L0 5Z" fill="#6a6a6a"/></svg>
<svg style="left:787px;top:337px" width="10" height="10" viewBox="0 0 10 10" fill="#ddd"><rect x="0" y="0" width="2.5" height="2.5"/><rect x="5" y="0" width="2.5" height="2.5"/><rect x="2.5" y="2.5" width="2.5" height="2.5"/><rect x="7.5" y="2.5" width="2.5" height="2.5"/><rect x="0" y="5" width="2.5" height="2.5"/><rect x="5" y="5" width="2.5" height="2.5"/><rect x="2.5" y="7.5" width="2.5" height="2.5"/><rect x="7.5" y="7.5" width="2.5" height="2.5"/></svg>
<svg style="left:801px;top:339px" width="4" height="5" viewBox="0 0 4 5"><path d="M0 0L4 2.5L0 5Z" fill="#6a6a6a"/></svg>
<svg style="left:810px;top:336px" width="12" height="12" viewBox="0 0 12 12"><circle cx="6" cy="6" r="3.2" fill="none" stroke="#e8e8e8" stroke-width="2"/><path d="M6 0v12M0 6h12M1.8 1.8l8.4 8.4M10.2 1.8l-8.4 8.4" stroke="#e8e8e8" stroke-width="1.6"/><circle cx="6" cy="6" r="1.6" fill="#383838"/></svg>

<!-- COLOR PANEL -->
<div class="tb" style="left:830px;top:47px;width:189.5px;height:15px"></div>
<div class="tab" style="left:830px;top:47px;width:27px;height:15px;line-height:17px;font-size:9.2px">Color</div>
<div class="p" style="left:830px;top:62px;width:189px;height:205px"></div>
<div class="a" style="left:1011px;top:62px;width:8px;height:205px;background:#2f2f2f"></div><div class="a" style="left:1011.5px;top:64px;width:7px;height:128px;background:#474747;border-radius:3px"></div>
<div class="a" style="left:856px;top:73.3px;width:137px;height:137px;border-radius:50%;background:conic-gradient(from 90deg,#ff0000,#ff00ff,#0000ff,#00ffff,#00ff00,#ffff00,#ff0000)"></div>
<div class="a" style="left:874.5px;top:91.8px;width:100px;height:100px;border-radius:50%;background:#383838"></div>
<div class="a" style="left:894.5px;top:111.5px;width:61.5px;height:61.5px;background:linear-gradient(to right,#000 0%,rgba(0,0,0,0.8) 25%,rgba(0,0,0,0.5) 50%,rgba(0,0,0,0.2) 75%,rgba(0,0,0,0) 100%),linear-gradient(to bottom,#fff 0%,#a4f5c0 33%,#1cec6c 56%,#00f010 100%)"></div>
<div class="a" style="left:879.5px;top:95.5px;width:7px;height:7px;border-radius:50%;border:1px solid #8fe0a0"></div>
<div class="a" style="left:951px;top:149.5px;width:8px;height:8px;border-radius:50%;border:1px solid #bfe8c8"></div>
<div class="a" style="left:834px;top:217.5px;width:15.5px;height:15.5px;background:#1cfe58"></div>
<div class="a" style="left:1000px;top:219.5px;width:10px;height:12.5px;background:#2d2d2d;border-radius:2px"></div>
<svg style="left:1001.5px;top:221.5px" width="8" height="8" viewBox="0 0 8 8"><path d="M0.5 7.5L1 5.5L4.5 2L6 3.5L2.5 7Z" fill="#ccc"/><path d="M4 1.5L6.5 4M5.3 2.7L7 1" stroke="#ccc" stroke-width="1.6"/></svg>
<div class="a" style="left:834.5px;top:236px;width:32.5px;height:12px;background:#404040;border-radius:2px"></div>
<div class="t" style="left:837px;top:236px">Hex</div>
<svg style="left:859px;top:240px" width="7" height="4" viewBox="0 0 7 4"><path d="M0.5 0.5L3.5 3.5L6.5 0.5" stroke="#999" fill="none"/></svg>
<div class="in" style="left:870px;top:236px;width:140px"><i style="left:4px">#</i>4ffd7a</div>
<div class="a" style="left:834.5px;top:256.3px;width:140px;height:2px;background:#e8e8e8;border-radius:1px"></div>
<div class="a" style="left:970.5px;top:253.3px;width:8px;height:8px;border-radius:4px;background:#2b2b2b;border:2px solid #3fd0b0"></div>
<div class="in" style="left:984.5px;top:251.5px;width:25.5px"><i>A</i>255</div>
<!-- ALIGN PANEL -->
<div class="tb" style="left:830px;top:270px;width:189.5px;height:15px"></div>
<div class="tab" style="left:830px;top:270px;width:25.5px;height:15px;line-height:15px;font-size:9px">Align</div>
<div class="p" style="left:830px;top:285px;width:189px;height:65px"></div>
<div class="t" style="left:835px;top:290px">Alignment</div>
<div class="t" style="left:835px;top:308px">Distribution</div>
<div class="a" style="left:835px;top:325.5px;width:179px;height:1px;background:#6e6e6e"></div>
<div class="t" style="left:835px;top:331.5px">Point Alignment</div>
<div class="a" style="left:936.5px;top:291.3px;width:10.5px;height:10px;background:#2b2b2b;border-radius:1px"></div>
<svg style="left:936.75px;top:291.3px" width="10" height="10" viewBox="0 0 10 10"><path d="M1.5 1v8" stroke="#eee" stroke-width="1"/><rect x="3" y="2" width="4" height="2.3" fill="#eee"/><rect x="3" y="5.6" width="6" height="2.3" fill="#eee"/></svg>
<div class="a" style="left:948.2px;top:291.3px;width:10.5px;height:10px;background:#2b2b2b;border-radius:1px"></div>
<svg style="left:948.45px;top:291.3px" width="10" height="10" viewBox="0 0 10 10"><path d="M5 0.5v9" stroke="#eee" stroke-width="1"/><rect x="3" y="2" width="4" height="2.3" fill="#eee"/><rect x="1.5" y="5.6" width="7" height="2.3" fill="#eee"/></svg>
<div class="a" style="left:960px;top:291.3px;width:10.5px;height:10px;background:#2b2b2b;border-radius:1px"></div>
<svg style="left:960.25px;top:291.3px" width="10" height="10" viewBox="0 0 10 10"><path d="M8.5 1v8" stroke="#eee" stroke-width="1"/><rect x="3" y="2" width="4" height="2.3" fill="#eee"/><rect x="1" y="5.6" width="6" height="2.3" fill="#eee"/></svg>
<div class="a" style="left:978.5px;top:291.3px;width:10.5px;height:10px;background:#2b2b2b;border-radius:1px"></div>
<svg style="left:978.75px;top:291.3px" width="10" height="10" viewBox="0 0 10 10"><path d="M1 1.5h8" stroke="#eee" stroke-width="1"/><rect x="2" y="3" width="2.3" height="6" fill="#eee"/><rect x="5.6" y="3" width="2.3" height="4" fill="#eee"/></svg>
<div class="a" style="left:990.3px;top:291.3px;width:10.5px;height:10px;background:#2b2b2b;border-radius:1px"></div>
<svg style="left:990.55px;top:291.3px" width="10" height="10" viewBox="0 0 10 10"><path d="M0.5 5h9" stroke="#eee" stroke-width="1"/><rect x="2" y="1.5" width="2.3" height="7" fill="#eee"/><rect x="5.6" y="3" width="2.3" height="4" fill="#eee"/></svg>
<div class="a" style="left:1002.5px;top:291.3px;width:10.5px;height:10px;background:#2b2b2b;border-radius:1px"></div>
<svg style="left:1002.75px;top:291.3px" width="10" height="10" viewBox="0 0 10 10"><path d="M1 8.5h8" stroke="#eee" stroke-width="1"/><rect x="2" y="3" width="2.3" height="4.5" fill="#eee"/><rect x="5.6" y="1" width="2.3" height="6.5" fill="#eee"/></svg>
<div class="a" style="left:936.5px;top:332.5px;width:10.5px;height:10px;background:#2b2b2b;border-radius:1px"></div>
<svg style="left:936.75px;top:332.5px" width="10" height="10" viewBox="0 0 10 10"><path d="M1.5 1v8" stroke="#eee" stroke-width="1"/><rect x="3" y="2" width="4" height="2.3" fill="#eee"/><rect x="3" y="5.6" width="6" height="2.3" fill="#eee"/></svg>
<div class="a" style="left:948.2px;top:332.5px;width:10.5px;height:10px;background:#2b2b2b;border-radius:1px"></div>
<svg style="left:948.45px;top:332.5px" width="10" height="10" viewBox="0 0 10 10"><path d="M5 0.5v9" stroke="#eee" stroke-width="1"/><rect x="3" y="2" width="4" height="2.3" fill="#eee"/><rect x="1.5" y="5.6" width="7" height="2.3" fill="#eee"/></svg>
<div class="a" style="left:960px;top:332.5px;width:10.5px;height:10px;background:#2b2b2b;border-radius:1px"></div>
<svg style="left:960.25px;top:332.5px" width="10" height="10" viewBox="0 0 10 10"><path d="M8.5 1v8" stroke="#eee" stroke-width="1"/><rect x="3" y="2" width="4" height="2.3" fill="#eee"/><rect x="1" y="5.6" width="6" height="2.3" fill="#eee"/></svg>
<div class="a" style="left:978.5px;top:332.5px;width:10.5px;height:10px;background:#2b2b2b;border-radius:1px"></div>
<svg style="left:978.75px;top:332.5px" width="10" height="10" viewBox="0 0 10 10"><path d="M1 1.5h8" stroke="#eee" stroke-width="1"/><rect x="2" y="3" width="2.3" height="6" fill="#eee"/><rect x="5.6" y="3" width="2.3" height="4" fill="#eee"/></svg>
<div class="a" style="left:990.3px;top:332.5px;width:10.5px;height:10px;background:#2b2b2b;border-radius:1px"></div>
<svg style="left:990.55px;top:332.5px" width="10" height="10" viewBox="0 0 10 10"><path d="M0.5 5h9" stroke="#eee" stroke-width="1"/><rect x="2" y="1.5" width="2.3" height="7" fill="#eee"/><rect x="5.6" y="3" width="2.3" height="4" fill="#eee"/></svg>
<div class="a" style="left:1002.5px;top:332.5px;width:10.5px;height:10px;background:#2b2b2b;border-radius:1px"></div>
<svg style="left:1002.75px;top:332.5px" width="10" height="10" viewBox="0 0 10 10"><path d="M1 8.5h8" stroke="#eee" stroke-width="1"/><rect x="2" y="3" width="2.3" height="4.5" fill="#eee"/><rect x="5.6" y="1" width="2.3" height="6.5" fill="#eee"/></svg>
<div class="a" style="left:936.5px;top:309px;width:10.5px;height:10px;background:#2b2b2b;border-radius:1px"></div>
<svg style="left:936.75px;top:309px" width="10" height="10" viewBox="0 0 10 10"><path d="M1.5 1v8M8.5 1v8" stroke="#eee" stroke-width="1"/><rect x="3.7" y="2.5" width="2.6" height="5" fill="#eee"/></svg>
<div class="a" style="left:948.2px;top:309px;width:10.5px;height:10px;background:#2b2b2b;border-radius:1px"></div>
<svg style="left:948.45px;top:309px" width="10" height="10" viewBox="0 0 10 10"><path d="M1 1.5h8M1 8.5h8" stroke="#eee" stroke-width="1"/><rect x="2.5" y="3.7" width="5" height="2.6" fill="#eee"/></svg>
<div class="a" style="left:960px;top:309px;width:10.5px;height:10px;background:#2b2b2b;border-radius:1px"></div>
<svg style="left:960.25px;top:309px" width="10" height="10" viewBox="0 0 10 10"><path d="M1 8.5L9 1.5" stroke="#999" stroke-width="0.8" stroke-dasharray="1 1"/><rect x="2" y="5.5" width="2" height="2" fill="#bbb"/><rect x="5.5" y="2.5" width="2" height="2" fill="#bbb"/></svg>

<!-- SCENE WINDOW -->
<div class="tb" style="left:293px;top:354px;width:726.5px;height:14px"></div>
<div class="tab" style="left:293px;top:354px;width:58.5px;height:14px;line-height:14px;padding-left:2.5px">Scene Window</div>
<div class="tab" style="left:351.5px;top:354px;width:68.5px;height:14px;line-height:14px;padding-left:5px;background:#272727">JavaScript Editor</div>
<div class="a" style="left:293px;top:369px;width:723px;height:14px;background:#2b2b2b"></div>
<div class="a" style="left:293px;top:369px;width:146px;height:14px;background:#383838"></div>
<div class="t" style="left:319.5px;top:370px;width:80px;text-align:center;color:#e8e8e8">Main</div>
<svg style="left:428px;top:373.8px" width="5" height="5" viewBox="0 0 5 5"><path d="M0.3 0.3L4.7 4.7M4.7 0.3L0.3 4.7" stroke="#8a8a8a" stroke-width="0.9"/></svg>
<div class="t" style="left:464px;top:370px;width:80px;text-align:center;color:#9a9a9a">ELEVATION</div>
<svg style="left:572px;top:373.8px" width="5" height="5" viewBox="0 0 5 5"><path d="M0.3 0.3L4.7 4.7M4.7 0.3L0.3 4.7" stroke="#8a8a8a" stroke-width="0.9"/></svg>
<div class="t" style="left:608px;top:370px;width:80px;text-align:center;color:#9a9a9a">TIME</div>
<svg style="left:716px;top:373.8px" width="5" height="5" viewBox="0 0 5 5"><path d="M0.3 0.3L4.7 4.7M4.7 0.3L0.3 4.7" stroke="#8a8a8a" stroke-width="0.9"/></svg>
<div class="t" style="left:752px;top:370px;width:80px;text-align:center;color:#9a9a9a">TOP SPORT</div>
<svg style="left:859.9px;top:373.8px" width="5" height="5" viewBox="0 0 5 5"><path d="M0.3 0.3L4.7 4.7M4.7 0.3L0.3 4.7" stroke="#8a8a8a" stroke-width="0.9"/></svg>
<div class="t" style="left:896px;top:370px;width:80px;text-align:center;color:#9a9a9a">DISTANCE</div>
<svg style="left:1004.3px;top:373.8px" width="5" height="5" viewBox="0 0 5 5"><path d="M0.3 0.3L4.7 4.7M4.7 0.3L0.3 4.7" stroke="#8a8a8a" stroke-width="0.9"/></svg>
<div class="a" style="left:583px;top:373px;width:1px;height:7px;background:#4a4a4a"></div>
<div class="a" style="left:727px;top:373px;width:1px;height:7px;background:#4a4a4a"></div>
<div class="a" style="left:871.5px;top:373px;width:1px;height:7px;background:#4a4a4a"></div>
<div class="p" style="left:293px;top:383px;width:372.8px;height:188px"></div>
<div class="a" style="left:293.5px;top:385.5px;width:246px;height:12px;background:#2b2b2b;border-radius:6px"></div>
<svg style="left:296px;top:387px" width="9" height="9" viewBox="0 0 10 10"><circle cx="4" cy="4" r="3" stroke="#bbb" stroke-width="1.1" fill="none"/><path d="M6.2 6.2L9 9" stroke="#bbb" stroke-width="1.4"/></svg>
<div class="t" style="left:309px;top:385.5px;color:#7d7d7d">Enter a layer name</div>
<div class="a" style="left:541.6px;top:385.5px;width:12.8px;height:12px;background:#2e2e2e;border-radius:2px"></div>
<svg style="left:544.5px;top:388px" width="8" height="8" viewBox="0 0 8 8"><path d="M3.5 0v7M0 3.5h7" stroke="#eee" stroke-width="1.4"/><rect x="7" y="7" width="1" height="1" fill="#eee"/></svg>
<div class="a" style="left:571.5px;top:385.5px;width:13px;height:12px;background:#2e2e2e;border-radius:2px"></div>
<svg style="left:573.5px;top:387px" width="9" height="9" viewBox="0 0 9 9"><circle cx="5.5" cy="3.5" r="3.3" fill="#999"/><path d="M0.5 8.5L3.5 5.5" stroke="#bbb" stroke-width="1.6"/></svg>
<div class="a" style="left:586.5px;top:385.5px;width:12.5px;height:12px;background:#2e2e2e;border-radius:2px"></div>
<svg style="left:587.5px;top:387.5px" width="10" height="8" viewBox="0 0 10 8"><path d="M0 1h10M0 4h10M0 7h10" stroke="#ccc" stroke-width="1"/><circle cx="6.5" cy="1" r="1.2" fill="#ccc"/><circle cx="3" cy="4" r="1.2" fill="#ccc"/><circle cx="6" cy="7" r="1.2" fill="#ccc"/></svg>
<div class="in" style="left:601px;top:385.5px;width:63.2px"><i>F</i>44</div>
<svg style="left:296px;top:400.8px" width="6" height="8" viewBox="0 0 6 8"><rect x="0" y="3.2" width="6" height="4.8" rx="0.6" fill="#ddd"/><path d="M1.2 3.5V2.2Q1.2 0.6 3 0.6Q4.8 0.6 4.8 2.2V3.5" stroke="#ddd" fill="none" stroke-width="1"/></svg>
<svg style="left:308px;top:402.3px" width="9" height="6" viewBox="0 0 9 7"><path d="M0.3 3.5Q4.5 -1.5 8.7 3.5Q4.5 8.5 0.3 3.5Z" fill="none" stroke="#aaa" stroke-width="0.9"/><circle cx="4.5" cy="3.5" r="1.4" fill="#aaa"/></svg>
<svg style="left:320px;top:400.8px" width="9" height="9" viewBox="0 0 9 9"><path d="M4.5 0.5L8.3 2.5V6.5L4.5 8.5L0.7 6.5V2.5Z M0.7 2.5L4.5 4.5L8.3 2.5M4.5 4.5V8.5" fill="none" stroke="#bbb" stroke-width="0.8"/></svg>
<svg style="left:333.5px;top:401.3px" width="8" height="8" viewBox="0 0 8 8"><path d="M0.5 7.5L1 5.5L4.5 2L6 3.5L2.5 7Z" fill="#ccc"/><path d="M4 1.5L6.5 4M5.3 2.7L7 1" stroke="#ccc" stroke-width="1.6"/></svg>
<svg style="left:345.5px;top:402.3px" width="9" height="6" viewBox="0 0 10 7"><path d="M0 3.5L3 0H10V7H3Z" fill="#ddd"/><circle cx="3.5" cy="3.5" r="1" fill="#383838"/></svg>
<div class="t" style="left:397px;top:399.3px">Name</div>
<div class="a" style="left:293px;top:411.55px;width:11.5px;height:13.5px;background:#2c2c2c"></div>
<div class="a" style="left:306px;top:411.55px;width:12.5px;height:13.5px;background:#2e2e2e"></div>
<svg style="left:307.5px;top:415.3px" width="9" height="6" viewBox="0 0 9 7"><path d="M0.3 3.5Q4.5 -1.5 8.7 3.5Q4.5 8.5 0.3 3.5Z" fill="none" stroke="#b5b5b5" stroke-width="0.9"/><circle cx="4.5" cy="3.5" r="1.4" fill="#b5b5b5"/></svg>
<div class="a" style="left:319.7px;top:411.55px;width:11.7px;height:13.5px;background:#2c2c2c"></div>
<div class="a" style="left:333px;top:412.8px;width:10px;height:11px;background:#c2b563"></div>
<svg style="left:345.5px;top:415.3px" width="9" height="6" viewBox="0 0 10 7"><path d="M0 3.5L3 0H10V7H3Z" fill="#ddd"/><circle cx="3.5" cy="3.5" r="1" fill="#383838"/></svg>
<svg style="left:397px;top:414.3px" width="8" height="8" viewBox="0 0 8 8"><rect x="0.5" y="0.5" width="7" height="7" fill="none" stroke="#d8c84a" stroke-width="0.9" stroke-dasharray="1.4 0.9"/></svg>
<div class="t" style="left:409px;top:412.3px">BG</div>
<div class="a" style="left:629.5px;top:413.3px;width:13.3px;height:10px;background:#303030;border-radius:2px"></div>
<svg style="left:630.5px;top:415.3px" width="11" height="6" viewBox="0 0 11 6"><path d="M0 3L2.5 0.3H5V5.7H2.5Z" fill="#e6c83c"/><path d="M7.5 0.8L10.2 3L7.5 5.2Z" fill="#6a6a6a"/></svg>
<svg style="left:646.5px;top:414.8px" width="7" height="7" viewBox="0 0 7 7"><circle cx="3.5" cy="3.5" r="2.8" fill="none" stroke="#666" stroke-width="0.9"/></svg>
<div class="a" style="left:293px;top:426.45px;width:11.5px;height:13.5px;background:#2c2c2c"></div>
<div class="a" style="left:306px;top:426.45px;width:12.5px;height:13.5px;background:#2e2e2e"></div>
<svg style="left:307.5px;top:430.2px" width="9" height="6" viewBox="0 0 9 7"><path d="M0.3 3.5Q4.5 -1.5 8.7 3.5Q4.5 8.5 0.3 3.5Z" fill="none" stroke="#b5b5b5" stroke-width="0.9"/><circle cx="4.5" cy="3.5" r="1.4" fill="#b5b5b5"/></svg>
<div class="a" style="left:319.7px;top:426.45px;width:11.7px;height:13.5px;background:#2c2c2c"></div>
<div class="a" style="left:333px;top:427.7px;width:10px;height:11px;background:#8763b6"></div>
<svg style="left:345.5px;top:430.2px" width="9" height="6" viewBox="0 0 10 7"><path d="M0 3.5L3 0H10V7H3Z" fill="#ddd"/><circle cx="3.5" cy="3.5" r="1" fill="#383838"/></svg>
<svg style="left:360px;top:431.7px" width="6" height="4" viewBox="0 0 6 4"><path d="M0.5 0.5L3 3.2L5.5 0.5" stroke="#888" fill="none" stroke-width="0.9"/></svg>
<div class="a" style="left:368.3px;top:426.45px;width:11px;height:13.5px;background:#303030"></div>
<div class="a" style="left:371.5px;top:431.2px;width:4px;height:4px;border-radius:2px;background:#f0f0f0"></div>
<svg style="left:383px;top:428.2px" width="10" height="10" viewBox="0 0 11 11"><rect x="0.5" y="0.5" width="10" height="10" fill="none" stroke="#b8b8b0" stroke-width="0.8" stroke-dasharray="1.5 1"/><rect x="2.5" y="2.5" width="6" height="6" fill="#e6d24a"/><path d="M3.5 3.7h4M5.5 3.7v4" stroke="#333" stroke-width="1.1"/></svg>
<div class="t" style="left:396px;top:427.2px">Title</div>
<div class="a" style="left:629.5px;top:428.2px;width:13.3px;height:10px;background:#303030;border-radius:2px"></div>
<svg style="left:630.5px;top:430.2px" width="11" height="6" viewBox="0 0 11 6"><path d="M0 3L2.5 0.3H5V5.7H2.5Z" fill="#e6c83c"/><path d="M7.5 0.8L10.2 3L7.5 5.2Z" fill="#6a6a6a"/></svg>
<svg style="left:646.5px;top:429.7px" width="7" height="7" viewBox="0 0 7 7"><circle cx="3.5" cy="3.5" r="2.8" fill="none" stroke="#666" stroke-width="0.9"/></svg>
<svg style="left:374.5px;top:440.6px" width="6" height="15" viewBox="0 0 6 15"><path d="M0.5 0V7.5H6M0.5 7.5V15" stroke="#777" fill="none" stroke-width="0.9"/></svg>
<div class="t" style="left:384px;top:442.1px">Position.Y</div>
<div class="in" style="left:590px;top:442.35px;width:56.3px;height:11.5px;line-height:11.5px;padding-left:11px"><i style="left:2.5px">Y</i>360.112</div>
<svg style="left:638.5px;top:445.1px" width="14" height="6" viewBox="0 0 14 6"><path d="M2.8 0.2L5.3 3L2.8 5.8L0.3 3Z" fill="#ddd"/><path d="M9.8 0.8L12.8 3L9.8 5.2Z" fill="#6a6a6a"/></svg>
<svg style="left:374.5px;top:455.5px" width="6" height="15" viewBox="0 0 6 15"><path d="M0.5 0V7.5H6" stroke="#777" fill="none" stroke-width="0.9"/></svg>
<div class="t" style="left:384px;top:457px">Rotation.Z</div>
<div class="in" style="left:590px;top:457.25px;width:56.3px;height:11.5px;line-height:11.5px;padding-left:11px"><i style="left:2.5px">Z</i>5.242</div>
<svg style="left:638.5px;top:460px" width="14" height="6" viewBox="0 0 14 6"><path d="M2.8 0.2L5.3 3L2.8 5.8L0.3 3Z" fill="#ddd"/><path d="M9.8 0.8L12.8 3L9.8 5.2Z" fill="#6a6a6a"/></svg>
<div class="a" style="left:293px;top:471.15px;width:11.5px;height:13.5px;background:#2c2c2c"></div>
<div class="a" style="left:306px;top:471.15px;width:12.5px;height:13.5px;background:#2e2e2e"></div>
<svg style="left:307.5px;top:474.9px" width="9" height="6" viewBox="0 0 9 7"><path d="M0.3 3.5Q4.5 -1.5 8.7 3.5Q4.5 8.5 0.3 3.5Z" fill="none" stroke="#b5b5b5" stroke-width="0.9"/><circle cx="4.5" cy="3.5" r="1.4" fill="#b5b5b5"/></svg>
<div class="a" style="left:319.7px;top:471.15px;width:11.7px;height:13.5px;background:#2c2c2c"></div>
<div class="a" style="left:333px;top:472.4px;width:10px;height:11px;background:#8763b6"></div>
<svg style="left:345.5px;top:474.9px" width="9" height="6" viewBox="0 0 10 7"><path d="M0 3.5L3 0H10V7H3Z" fill="#ddd"/><circle cx="3.5" cy="3.5" r="1" fill="#383838"/></svg>
<svg style="left:360px;top:476.4px" width="6" height="4" viewBox="0 0 6 4"><path d="M0.5 0.5L3 3.2L5.5 0.5" stroke="#888" fill="none" stroke-width="0.9"/></svg>
<div class="a" style="left:368.3px;top:471.15px;width:11px;height:13.5px;background:#303030"></div>
<div class="a" style="left:371.5px;top:475.9px;width:4px;height:4px;border-radius:2px;background:#f0f0f0"></div>
<svg style="left:383px;top:472.9px" width="10" height="10" viewBox="0 0 11 11"><rect x="0.5" y="0.5" width="10" height="10" fill="none" stroke="#b8b8b0" stroke-width="0.8" stroke-dasharray="1.5 1"/><rect x="2.5" y="2.5" width="6" height="6" fill="#e6d24a"/><path d="M3.5 3.7h4M5.5 3.7v4" stroke="#333" stroke-width="1.1"/></svg>
<div class="t" style="left:396px;top:471.9px">Title Small</div>
<div class="a" style="left:629.5px;top:472.9px;width:13.3px;height:10px;background:#303030;border-radius:2px"></div>
<svg style="left:630.5px;top:474.9px" width="11" height="6" viewBox="0 0 11 6"><path d="M0 3L2.5 0.3H5V5.7H2.5Z" fill="#e6c83c"/><path d="M7.5 0.8L10.2 3L7.5 5.2Z" fill="#6a6a6a"/></svg>
<svg style="left:646.5px;top:474.4px" width="7" height="7" viewBox="0 0 7 7"><circle cx="3.5" cy="3.5" r="2.8" fill="none" stroke="#666" stroke-width="0.9"/></svg>
<svg style="left:374.5px;top:485.3px" width="6" height="15" viewBox="0 0 6 15"><path d="M0.5 0V7.5H6" stroke="#777" fill="none" stroke-width="0.9"/></svg>
<div class="t" style="left:384px;top:486.8px">Position.Y</div>
<div class="in" style="left:590px;top:487.05px;width:56.3px;height:11.5px;line-height:11.5px;padding-left:9px"><i style="left:2.5px">Y</i>1048.116</div>
<svg style="left:638.5px;top:489.8px" width="14" height="6" viewBox="0 0 14 6"><path d="M2.8 0.2L5.3 3L2.8 5.8L0.3 3Z" fill="#ddd"/><path d="M9.8 0.8L12.8 3L9.8 5.2Z" fill="#6a6a6a"/></svg>
<div class="a" style="left:293px;top:500.95px;width:11.5px;height:13.5px;background:#2c2c2c"></div>
<div class="a" style="left:306px;top:500.95px;width:12.5px;height:13.5px;background:#2e2e2e"></div>
<svg style="left:307.5px;top:504.7px" width="9" height="6" viewBox="0 0 9 7"><path d="M0.3 3.5Q4.5 -1.5 8.7 3.5Q4.5 8.5 0.3 3.5Z" fill="none" stroke="#b5b5b5" stroke-width="0.9"/><circle cx="4.5" cy="3.5" r="1.4" fill="#b5b5b5"/></svg>
<div class="a" style="left:319.7px;top:500.95px;width:11.7px;height:13.5px;background:#2c2c2c"></div>
<div class="a" style="left:333px;top:502.2px;width:10px;height:11px;background:#c8c8c8"></div>
<svg style="left:345.5px;top:504.7px" width="9" height="6" viewBox="0 0 10 7"><path d="M0 3.5L3 0H10V7H3Z" fill="#ddd"/><circle cx="3.5" cy="3.5" r="1" fill="#383838"/></svg>
<svg style="left:360px;top:506.2px" width="6" height="4" viewBox="0 0 6 4"><path d="M0.5 0.5L3 3.2L5.5 0.5" stroke="#888" fill="none" stroke-width="0.9"/></svg>
<div class="a" style="left:368.3px;top:500.95px;width:11px;height:13.5px;background:#303030"></div>
<div class="a" style="left:371.5px;top:505.7px;width:4px;height:4px;border-radius:2px;background:#f0f0f0"></div>
<svg style="left:383px;top:503.7px" width="10" height="8" viewBox="0 0 11 9"><path d="M0 1.2Q0 0.5 0.7 0.5H3.8L5 2H10.3Q11 2 11 2.7V8.3Q11 9 10.3 9H0.7Q0 9 0 8.3Z" fill="#e0e0e0"/></svg>
<div class="t" style="left:396px;top:501.7px">Sections</div>
<svg style="left:646.5px;top:504.2px" width="7" height="7" viewBox="0 0 7 7"><circle cx="3.5" cy="3.5" r="2.8" fill="none" stroke="#666" stroke-width="0.9"/></svg>
<svg style="left:374.5px;top:515.1px" width="6" height="15" viewBox="0 0 6 15"><path d="M0.5 0V7.5H6" stroke="#777" fill="none" stroke-width="0.9"/></svg>
<div class="t" style="left:384px;top:516.6px">Position.Y</div>
<div class="in" style="left:590px;top:516.85px;width:56.3px;height:11.5px;line-height:11.5px;padding-left:9px"><i style="left:2.5px">Y</i>1606.000</div>
<svg style="left:638.5px;top:519.6px" width="14" height="6" viewBox="0 0 14 6"><path d="M2.8 0.2L5.3 3L2.8 5.8L0.3 3Z" fill="#ddd"/><path d="M9.8 0.8L12.8 3L9.8 5.2Z" fill="#6a6a6a"/></svg>
<div class="a" style="left:293px;top:530.75px;width:11.5px;height:13.5px;background:#2c2c2c"></div>
<div class="a" style="left:306px;top:530.75px;width:12.5px;height:13.5px;background:#2e2e2e"></div>
<svg style="left:307.5px;top:534.5px" width="9" height="6" viewBox="0 0 9 7"><path d="M0.3 3.5Q4.5 -1.5 8.7 3.5Q4.5 8.5 0.3 3.5Z" fill="none" stroke="#b5b5b5" stroke-width="0.9"/><circle cx="4.5" cy="3.5" r="1.4" fill="#b5b5b5"/></svg>
<div class="a" style="left:319.7px;top:530.75px;width:11.7px;height:13.5px;background:#2c2c2c"></div>
<div class="a" style="left:333px;top:532px;width:10px;height:11px;background:#5fb3a3"></div>
<svg style="left:345.5px;top:534.5px" width="9" height="6" viewBox="0 0 10 7"><path d="M0 3.5L3 0H10V7H3Z" fill="#ddd"/><circle cx="3.5" cy="3.5" r="1" fill="#383838"/></svg>
<svg style="left:396px;top:533.5px" width="10" height="8" viewBox="0 0 11 9"><rect x="0.5" y="0.5" width="10" height="6.5" rx="0.8" fill="none" stroke="#ddd" stroke-width="1.1"/><path d="M0 8.5h11" stroke="#ddd" stroke-width="1"/></svg>
<div class="t" style="left:409px;top:531.5px">TOP SPORT</div>
<svg style="left:646.5px;top:534px" width="7" height="7" viewBox="0 0 7 7"><circle cx="3.5" cy="3.5" r="2.8" fill="none" stroke="#666" stroke-width="0.9"/></svg>
<div class="a" style="left:604.5px;top:531.5px;width:37px;height:12px;background:#2b2b2b;border-radius:2px"></div>
<svg style="left:607.5px;top:533px" width="9" height="9" viewBox="0 0 9 9"><path d="M4 1.5H0.5V8.5H7.5V5" stroke="#ddd" fill="none" stroke-width="1"/><path d="M2.5 6.5L7 2M4.5 0.8H8.2V4.5" stroke="#ddd" fill="none" stroke-width="1"/></svg>
<div class="t" style="left:618.5px;top:531.5px">Open</div>
<div class="a" style="left:333px;top:546.5px;width:10px;height:3px;background:#5fb3a3"></div>
<div class="a" style="left:658px;top:412px;width:6px;height:136px;background:#303030;border-radius:3px"></div>
<div class="a" style="left:658px;top:452px;width:6px;height:51px;background:#484848;border-radius:3px"></div>
<div class="a" style="left:293.5px;top:549.5px;width:362px;height:5.5px;background:#313131;border-radius:3px"></div>
<div class="a" style="left:293.5px;top:549.5px;width:362px;height:5.5px;background:#474747;border-radius:3px"></div>
<div class="a" style="left:293px;top:557px;width:372px;height:14px;background:#383838"></div>
<svg style="left:297px;top:561.5px" width="9" height="6" viewBox="0 0 10 7"><path d="M0 3.5L3 0H10V7H3Z" fill="#ddd"/><circle cx="3.5" cy="3.5" r="1" fill="#383838"/></svg>
<div class="a" style="left:526px;top:560px;width:9px;height:9px;border:1px solid #aaa;border-radius:1px"></div>
<div class="a" style="left:529.5px;top:563.5px;width:2px;height:2px;background:#ddd"></div>
<div class="a" style="left:540px;top:558px;width:58px;height:13px;background:#262626;border-radius:2px"></div>
<svg style="left:544px;top:561px" width="8" height="7" viewBox="0 0 8 7"><path d="M1 1h6M0 3.5h5M2 6h6" stroke="#27c86a" stroke-width="1.4"/></svg>
<div class="t" style="left:555px;top:558.5px">Time Editor</div>
<div class="a" style="left:600px;top:558px;width:65px;height:13px;background:#4b4b4b;border-radius:2px"></div>
<svg style="left:603.5px;top:560.5px" width="8" height="8" viewBox="0 0 8 8"><path d="M0.5 0v7.5H8" stroke="#aaa" fill="none" stroke-width="0.9"/><path d="M1.5 6L4 3L5.5 4.5L7.5 1.5" stroke="#ccc" fill="none" stroke-width="0.9" stroke-dasharray="1.2 0.8"/></svg>
<div class="t" style="left:614.5px;top:558.5px">Graph Editor</div>

<!-- TIMELINE -->
<div class="a" style="left:670.5px;top:383px;width:349px;height:174px;background:#232323"></div>
<div class="a" style="left:670.5px;top:383px;width:349px;height:18px;background:#232323"></div>
<div class="a" style="left:670.5px;top:401px;width:349px;height:10px;background:#3a3a3a"></div>
<div class="t" style="left:659px;top:383.5px;width:30px;text-align:center;color:#c4c4c4">0</div>
<div class="a" style="left:673.5px;top:394px;width:1px;height:6px;background:#b0b0b0"></div>
<div class="a" style="left:678.98px;top:396.5px;width:1px;height:3.5px;background:#9a9a9a"></div>
<div class="a" style="left:684.46px;top:396.5px;width:1px;height:3.5px;background:#9a9a9a"></div>
<div class="a" style="left:689.94px;top:396.5px;width:1px;height:3.5px;background:#9a9a9a"></div>
<div class="a" style="left:695.42px;top:396.5px;width:1px;height:3.5px;background:#9a9a9a"></div>
<div class="t" style="left:686.4px;top:383.5px;width:30px;text-align:center;color:#c4c4c4">20</div>
<div class="a" style="left:700.9px;top:394px;width:1px;height:6px;background:#b0b0b0"></div>
<div class="a" style="left:706.38px;top:396.5px;width:1px;height:3.5px;background:#9a9a9a"></div>
<div class="a" style="left:711.86px;top:396.5px;width:1px;height:3.5px;background:#9a9a9a"></div>
<div class="a" style="left:717.34px;top:396.5px;width:1px;height:3.5px;background:#9a9a9a"></div>
<div class="a" style="left:722.82px;top:396.5px;width:1px;height:3.5px;background:#9a9a9a"></div>
<div class="t" style="left:713.8px;top:383.5px;width:30px;text-align:center;color:#c4c4c4">40</div>
<div class="a" style="left:728.3px;top:394px;width:1px;height:6px;background:#b0b0b0"></div>
<div class="a" style="left:733.78px;top:396.5px;width:1px;height:3.5px;background:#9a9a9a"></div>
<div class="a" style="left:739.26px;top:396.5px;width:1px;height:3.5px;background:#9a9a9a"></div>
<div class="a" style="left:744.74px;top:396.5px;width:1px;height:3.5px;background:#9a9a9a"></div>
<div class="a" style="left:750.22px;top:396.5px;width:1px;height:3.5px;background:#9a9a9a"></div>
<div class="t" style="left:741.2px;top:383.5px;width:30px;text-align:center;color:#c4c4c4">60</div>
<div class="a" style="left:755.7px;top:394px;width:1px;height:6px;background:#b0b0b0"></div>
<div class="a" style="left:761.18px;top:396.5px;width:1px;height:3.5px;background:#9a9a9a"></div>
<div class="a" style="left:766.66px;top:396.5px;width:1px;height:3.5px;background:#9a9a9a"></div>
<div class="a" style="left:772.14px;top:396.5px;width:1px;height:3.5px;background:#9a9a9a"></div>
<div class="a" style="left:777.62px;top:396.5px;width:1px;height:3.5px;background:#9a9a9a"></div>
<div class="t" style="left:768.6px;top:383.5px;width:30px;text-align:center;color:#c4c4c4">80</div>
<div class="a" style="left:783.1px;top:394px;width:1px;height:6px;background:#b0b0b0"></div>
<div class="a" style="left:788.58px;top:396.5px;width:1px;height:3.5px;background:#9a9a9a"></div>
<div class="a" style="left:794.06px;top:396.5px;width:1px;height:3.5px;background:#9a9a9a"></div>
<div class="a" style="left:799.54px;top:396.5px;width:1px;height:3.5px;background:#9a9a9a"></div>
<div class="a" style="left:805.02px;top:396.5px;width:1px;height:3.5px;background:#9a9a9a"></div>
<div class="t" style="left:796px;top:383.5px;width:30px;text-align:center;color:#c4c4c4">100</div>
<div class="a" style="left:810.5px;top:394px;width:1px;height:6px;background:#b0b0b0"></div>
<div class="a" style="left:815.98px;top:396.5px;width:1px;height:3.5px;background:#9a9a9a"></div>
<div class="a" style="left:821.46px;top:396.5px;width:1px;height:3.5px;background:#9a9a9a"></div>
<div class="a" style="left:826.94px;top:396.5px;width:1px;height:3.5px;background:#9a9a9a"></div>
<div class="a" style="left:832.42px;top:396.5px;width:1px;height:3.5px;background:#9a9a9a"></div>
<div class="t" style="left:823.4px;top:383.5px;width:30px;text-align:center;color:#c4c4c4">120</div>
<div class="a" style="left:837.9px;top:394px;width:1px;height:6px;background:#b0b0b0"></div>
<div class="a" style="left:843.38px;top:396.5px;width:1px;height:3.5px;background:#9a9a9a"></div>
<div class="a" style="left:848.86px;top:396.5px;width:1px;height:3.5px;background:#9a9a9a"></div>
<div class="a" style="left:854.34px;top:396.5px;width:1px;height:3.5px;background:#9a9a9a"></div>
<div class="a" style="left:859.82px;top:396.5px;width:1px;height:3.5px;background:#9a9a9a"></div>
<div class="t" style="left:850.8px;top:383.5px;width:30px;text-align:center;color:#c4c4c4">140</div>
<div class="a" style="left:865.3px;top:394px;width:1px;height:6px;background:#b0b0b0"></div>
<div class="a" style="left:870.78px;top:396.5px;width:1px;height:3.5px;background:#9a9a9a"></div>
<div class="a" style="left:876.26px;top:396.5px;width:1px;height:3.5px;background:#9a9a9a"></div>
<div class="a" style="left:881.74px;top:396.5px;width:1px;height:3.5px;background:#9a9a9a"></div>
<div class="a" style="left:887.22px;top:396.5px;width:1px;height:3.5px;background:#9a9a9a"></div>
<div class="t" style="left:878.2px;top:383.5px;width:30px;text-align:center;color:#c4c4c4">160</div>
<div class="a" style="left:892.7px;top:394px;width:1px;height:6px;background:#b0b0b0"></div>
<div class="a" style="left:898.18px;top:396.5px;width:1px;height:3.5px;background:#9a9a9a"></div>
<div class="a" style="left:903.66px;top:396.5px;width:1px;height:3.5px;background:#9a9a9a"></div>
<div class="a" style="left:909.14px;top:396.5px;width:1px;height:3.5px;background:#9a9a9a"></div>
<div class="a" style="left:914.62px;top:396.5px;width:1px;height:3.5px;background:#9a9a9a"></div>
<div class="t" style="left:905.6px;top:383.5px;width:30px;text-align:center;color:#c4c4c4">180</div>
<div class="a" style="left:920.1px;top:394px;width:1px;height:6px;background:#b0b0b0"></div>
<div class="a" style="left:925.58px;top:396.5px;width:1px;height:3.5px;background:#9a9a9a"></div>
<div class="a" style="left:931.06px;top:396.5px;width:1px;height:3.5px;background:#9a9a9a"></div>
<div class="a" style="left:936.54px;top:396.5px;width:1px;height:3.5px;background:#9a9a9a"></div>
<div class="a" style="left:942.02px;top:396.5px;width:1px;height:3.5px;background:#9a9a9a"></div>
<div class="t" style="left:933px;top:383.5px;width:30px;text-align:center;color:#c4c4c4">200</div>
<div class="a" style="left:947.5px;top:394px;width:1px;height:6px;background:#b0b0b0"></div>
<div class="a" style="left:952.98px;top:396.5px;width:1px;height:3.5px;background:#9a9a9a"></div>
<div class="a" style="left:958.46px;top:396.5px;width:1px;height:3.5px;background:#9a9a9a"></div>
<div class="a" style="left:963.94px;top:396.5px;width:1px;height:3.5px;background:#9a9a9a"></div>
<div class="a" style="left:969.42px;top:396.5px;width:1px;height:3.5px;background:#9a9a9a"></div>
<div class="t" style="left:960.4px;top:383.5px;width:30px;text-align:center;color:#c4c4c4">220</div>
<div class="a" style="left:974.9px;top:394px;width:1px;height:6px;background:#b0b0b0"></div>
<div class="a" style="left:980.38px;top:396.5px;width:1px;height:3.5px;background:#9a9a9a"></div>
<div class="a" style="left:985.86px;top:396.5px;width:1px;height:3.5px;background:#9a9a9a"></div>
<div class="a" style="left:991.34px;top:396.5px;width:1px;height:3.5px;background:#9a9a9a"></div>
<div class="a" style="left:996.82px;top:396.5px;width:1px;height:3.5px;background:#9a9a9a"></div>
<div class="t" style="left:987.8px;top:383.5px;width:30px;text-align:center;color:#c4c4c4">240</div>
<div class="a" style="left:1002.3px;top:394px;width:1px;height:6px;background:#b0b0b0"></div>
<div class="a" style="left:1007.78px;top:396.5px;width:1px;height:3.5px;background:#9a9a9a"></div>
<div class="a" style="left:1013.26px;top:396.5px;width:1px;height:3.5px;background:#9a9a9a"></div>
<div class="a" style="left:670.5px;top:399px;width:3.5px;height:12px;background:#5fd3b5;border-radius:1px"></div>
<div class="a" style="left:1015.8px;top:399px;width:3.7px;height:12px;background:#5fd3b5;border-radius:1px"></div>
<div class="a" style="left:674px;top:412.8px;width:342px;height:11px;background:#b5a95e;border-radius:2px"></div>
<div class="t" style="left:679px;top:412.3px;color:#efe9c8">BG</div>
<div class="a" style="left:674px;top:427.7px;width:342px;height:11px;background:#7c5ba6;border-radius:2px"></div>
<div class="t" style="left:679px;top:427.2px;color:#f2f2f2">Title</div>
<div class="a" style="left:674px;top:472.4px;width:342px;height:11px;background:#7c5ba6;border-radius:2px"></div>
<div class="t" style="left:679px;top:471.9px;color:#f2f2f2">Title Small</div>
<div class="a" style="left:805px;top:502.2px;width:214.5px;height:11px;background:#bbbbbb;border-radius:2px"></div>
<div class="t" style="left:810px;top:501.7px;color:#f4f4f4">Sections</div>
<div class="a" style="left:805px;top:532px;width:214.5px;height:11px;background:#5aa897;border-radius:2px"></div>
<div class="t" style="left:810px;top:531.5px;color:#f2f2f2">TOP SPORT</div>
<div class="a" style="left:805px;top:545.5px;width:214.5px;height:1.5px;background:#4f9686"></div>
<div class="a" style="left:724.3px;top:447.5px;width:29.1px;height:1px;background:#6f6485"></div>
<svg style="left:721.3px;top:445px" width="6" height="6" viewBox="0 0 6 6"><path d="M3 0L6 3L3 6L0 3Z" fill="#d6d6d6"/></svg>
<svg style="left:750.4px;top:445px" width="6" height="6" viewBox="0 0 6 6"><path d="M3 0L6 3L3 6L0 3Z" fill="#d6d6d6"/></svg>
<div class="a" style="left:724.3px;top:462.5px;width:29.1px;height:1px;background:#6f6485"></div>
<svg style="left:721.3px;top:460px" width="6" height="6" viewBox="0 0 6 6"><path d="M3 0L6 3L3 6L0 3Z" fill="#d6d6d6"/></svg>
<svg style="left:750.4px;top:460px" width="6" height="6" viewBox="0 0 6 6"><path d="M3 0L6 3L3 6L0 3Z" fill="#d6d6d6"/></svg>
<div class="a" style="left:799.7px;top:492.3px;width:24.7px;height:1px;background:#6a5192"></div>
<svg style="left:796.7px;top:489.8px" width="6" height="6" viewBox="0 0 6 6"><path d="M3 0L6 3L3 6L0 3Z" fill="#d6d6d6"/></svg>
<svg style="left:821.4px;top:489.8px" width="6" height="6" viewBox="0 0 6 6"><path d="M3 0L6 3L3 6L0 3Z" fill="#d6d6d6"/></svg>
<div class="a" style="left:805.2px;top:522.1px;width:53.3px;height:1px;background:#a0a0a0"></div>
<svg style="left:802.2px;top:519.6px" width="6" height="6" viewBox="0 0 6 6"><path d="M3 0L6 3L3 6L0 3Z" fill="#d6d6d6"/></svg>
<svg style="left:855.5px;top:519.6px" width="6" height="6" viewBox="0 0 6 6"><path d="M3 0L6 3L3 6L0 3Z" fill="#d6d6d6"/></svg>
<div class="a" style="left:733.78px;top:396px;width:1px;height:149px;background:rgba(130,215,195,0.6)"></div>
<svg style="left:728.98px;top:392.5px" width="10.6" height="6.5" viewBox="0 0 10.6 6.5"><path d="M0 0H10.6L5.3 6.5Z" fill="#55d6b8"/></svg>
<div class="a" style="left:667px;top:474px;width:1px;height:8px;border-left:1px dotted #6a6a6a"></div>
<div class="a" style="left:671.5px;top:549.5px;width:347px;height:5.5px;background:#454545;border-radius:3px"></div>
<div class="a" style="left:670.5px;top:557px;width:349px;height:14px;background:#383838"></div>
<svg style="left:673.5px;top:560.5px" width="10" height="8" viewBox="0 0 10 8"><path d="M0 1h10M0 4h10M3 7h7" stroke="#ccc" stroke-width="1.1"/><circle cx="1" cy="7" r="0.8" fill="#ccc"/></svg>
<div class="a" style="left:686px;top:558.5px;width:102.5px;height:12px;background:#2b2b2b;border-radius:2px"></div>
<div class="t" style="left:688.5px;top:558.5px">Default Keyframe Layer</div>
<div class="t" style="left:792px;top:558.5px;color:#8a8a8a">Align:</div>
<div class="a" style="left:818.5px;top:559.5px;width:10.5px;height:10px;background:#2b2b2b;border-radius:1px"></div>
<svg style="left:818.75px;top:559.5px" width="10" height="10" viewBox="0 0 10 10"><path d="M1.5 1v8" stroke="#eee" stroke-width="1"/><rect x="3" y="2" width="4" height="2.3" fill="#eee"/><rect x="3" y="5.6" width="6" height="2.3" fill="#eee"/></svg>
<div class="a" style="left:830.2px;top:559.5px;width:10.5px;height:10px;background:#2b2b2b;border-radius:1px"></div>
<svg style="left:830.45px;top:559.5px" width="10" height="10" viewBox="0 0 10 10"><path d="M5 0.5v9" stroke="#eee" stroke-width="1"/><rect x="3" y="2" width="4" height="2.3" fill="#eee"/><rect x="1.5" y="5.6" width="7" height="2.3" fill="#eee"/></svg>
<div class="a" style="left:842px;top:559.5px;width:10.5px;height:10px;background:#2b2b2b;border-radius:1px"></div>
<svg style="left:842.25px;top:559.5px" width="10" height="10" viewBox="0 0 10 10"><path d="M8.5 1v8" stroke="#eee" stroke-width="1"/><rect x="3" y="2" width="4" height="2.3" fill="#eee"/><rect x="1" y="5.6" width="6" height="2.3" fill="#eee"/></svg>
<div class="a" style="left:855.5px;top:559px;width:11.5px;height:11px;background:#2b2b2b;border-radius:1px"></div>
<svg style="left:857.5px;top:561px" width="8" height="7" viewBox="0 0 8 7"><rect x="0.5" y="0.5" width="7" height="6" fill="none" stroke="#3f6f58" stroke-width="0.9" stroke-dasharray="1.3 0.9"/></svg>
<svg style="left:871.5px;top:560px" width="10" height="9" viewBox="0 0 10 9"><path d="M1.5 8V5A3.5 3.5 0 0 1 8.5 5" stroke="#ddd" stroke-width="2" fill="none"/><path d="M7 6l3 2" stroke="#ddd" stroke-width="1.2"/></svg>
<svg style="left:885px;top:562px" width="4" height="5" viewBox="0 0 4 5"><path d="M0 0L4 2.5L0 5Z" fill="#6a6a6a"/></svg>
<svg style="left:894px;top:559.5px" width="11" height="10" viewBox="0 0 11 10"><path d="M0 5.5L4 4.5L5 0.5H6.2L6.5 4.3L10.5 5L10.5 6L6.5 6.2L6.2 9.5H5L4 6.5L0 6.5Z" fill="#ddd"/></svg>
<svg style="left:908.5px;top:562px" width="4" height="5" viewBox="0 0 4 5"><path d="M0 0L4 2.5L0 5Z" fill="#6a6a6a"/></svg>

</div></body></html>
